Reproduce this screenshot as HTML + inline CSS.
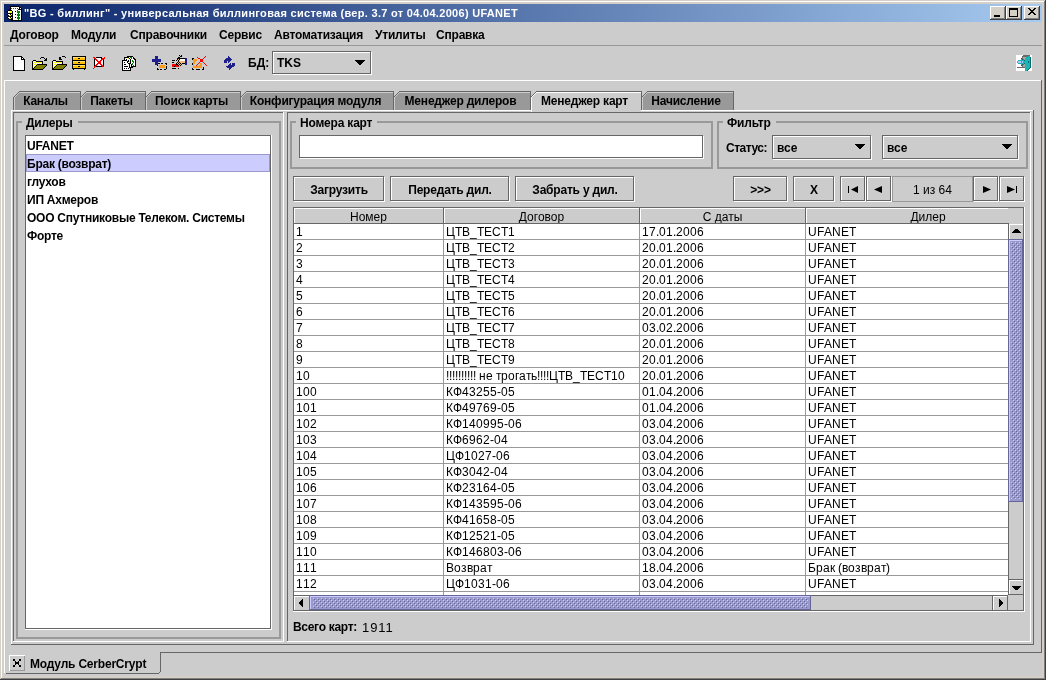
<!DOCTYPE html>
<html><head><meta charset="utf-8"><style>
html,body{margin:0;padding:0;width:1046px;height:680px;overflow:hidden;background:#cccccc}
body>div,#root div{position:absolute}
#root{position:absolute;left:0;top:0;width:1046px;height:680px;overflow:hidden;will-change:transform}
.t{font-family:"Liberation Sans",sans-serif;line-height:14px;white-space:pre;color:#000}
svg{position:absolute;shape-rendering:crispEdges}
</style></head><body><div id="root">
<div style="left:0px;top:0px;width:1046px;height:680px;background:#d4d0c8;"></div>
<div style="left:4px;top:22px;width:1038px;height:654px;background:#cccccc;"></div>
<div style="left:0px;top:0px;width:1046px;height:1px;background:#d4d0c8;"></div>
<div style="left:0px;top:0px;width:1px;height:680px;background:#d4d0c8;"></div>
<div style="left:1px;top:1px;width:1044px;height:1px;background:#ffffff;"></div>
<div style="left:1px;top:1px;width:1px;height:678px;background:#ffffff;"></div>
<div style="left:0px;top:679px;width:1046px;height:1px;background:#404040;"></div>
<div style="left:1045px;top:0px;width:1px;height:680px;background:#404040;"></div>
<div style="left:1px;top:678px;width:1044px;height:1px;background:#808080;"></div>
<div style="left:1044px;top:1px;width:1px;height:678px;background:#808080;"></div>
<div style="left:4px;top:4px;width:1038px;height:18px;background:#0a246a;background:linear-gradient(to right,#0a246a,#a6caf0);"></div>
<svg style="left:7px;top:6px" width="15" height="15"><path d="M3 0h9v1h-9zM3 1h1v1h-1zM12 1h2v1h-2zM3 2h1v1h-1zM12 2h1v1h-1zM14 2h1v1h-1zM2 3h2v1h-2zM11 3h4v1h-4zM1 4h4v1h-4zM14 4h1v1h-1zM0 5h1v1h-1zM5 5h1v1h-1zM8 5h1v1h-1zM14 5h1v1h-1zM0 6h1v1h-1zM5 6h1v1h-1zM14 6h1v1h-1zM1 7h5v1h-5zM14 7h1v1h-1zM0 8h1v1h-1zM3 8h1v1h-1zM5 8h1v1h-1zM8 8h1v1h-1zM14 8h1v1h-1zM1 9h1v1h-1zM4 9h2v1h-2zM14 9h1v1h-1zM1 10h5v1h-5zM14 10h1v1h-1zM0 11h1v1h-1zM3 11h1v1h-1zM5 11h1v1h-1zM8 11h1v1h-1zM14 11h1v1h-1zM1 12h1v1h-1zM4 12h2v1h-2zM14 12h1v1h-1zM2 13h4v1h-4zM14 13h1v1h-1zM4 14h11v1h-11z" fill="#000000"/><path d="M4 1h8v1h-8zM5 2h1v1h-1zM7 2h1v1h-1zM9 2h1v1h-1zM11 2h1v1h-1zM13 2h1v1h-1zM4 3h7v1h-7zM5 4h5v1h-5zM11 4h3v1h-3zM1 5h2v1h-2zM6 5h2v1h-2zM9 5h1v1h-1zM13 5h1v1h-1zM1 6h1v1h-1zM6 6h4v1h-4zM13 6h1v1h-1zM6 7h5v1h-5zM12 7h2v1h-2zM1 8h2v1h-2zM6 8h2v1h-2zM9 8h1v1h-1zM13 8h1v1h-1zM6 9h4v1h-4zM13 9h1v1h-1zM6 10h5v1h-5zM12 10h2v1h-2zM1 11h2v1h-2zM6 11h2v1h-2zM9 11h1v1h-1zM13 11h1v1h-1zM6 12h4v1h-4zM13 12h1v1h-1zM6 13h5v1h-5zM12 13h2v1h-2z" fill="#ffffff"/><path d="M4 2h1v1h-1zM6 2h1v1h-1zM8 2h1v1h-1zM10 2h1v1h-1z" fill="#ff0000"/><path d="M10 4h1v1h-1zM10 5h3v1h-3zM10 6h3v1h-3zM11 7h1v1h-1zM10 8h3v1h-3zM10 9h3v1h-3zM11 10h1v1h-1zM10 11h3v1h-3zM10 12h3v1h-3zM11 13h1v1h-1z" fill="#008000"/><path d="M3 5h2v1h-2zM2 6h3v1h-3zM4 8h1v1h-1zM2 9h2v1h-2zM4 11h1v1h-1zM2 12h2v1h-2z" fill="#ffff00"/></svg>
<svg style="left:13px;top:56px" width="12" height="15"><path d="M0 0h9v1h-9zM0 1h1v1h-1zM8 1h2v1h-2zM0 2h1v1h-1zM8 2h1v1h-1zM10 2h1v1h-1zM0 3h1v1h-1zM8 3h4v1h-4zM0 4h1v1h-1zM11 4h1v1h-1zM0 5h1v1h-1zM11 5h1v1h-1zM0 6h1v1h-1zM11 6h1v1h-1zM0 7h1v1h-1zM11 7h1v1h-1zM0 8h1v1h-1zM11 8h1v1h-1zM0 9h1v1h-1zM11 9h1v1h-1zM0 10h1v1h-1zM11 10h1v1h-1zM0 11h1v1h-1zM11 11h1v1h-1zM0 12h1v1h-1zM11 12h1v1h-1zM0 13h1v1h-1zM11 13h1v1h-1zM0 14h12v1h-12z" fill="#000000"/><path d="M1 1h7v1h-7zM1 2h7v1h-7zM9 2h1v1h-1zM1 3h7v1h-7zM1 4h10v1h-10zM1 5h10v1h-10zM1 6h10v1h-10zM1 7h10v1h-10zM1 8h10v1h-10zM1 9h10v1h-10zM1 10h10v1h-10zM1 11h10v1h-10zM1 12h10v1h-10zM1 13h10v1h-10z" fill="#ffffff"/></svg>
<svg style="left:40px;top:57px" width="7" height="4"><path d="M1 0h3v1h-3zM0 1h1v1h-1zM4 1h1v1h-1zM6 1h1v1h-1zM5 2h2v1h-2zM4 3h3v1h-3z" fill="#000000"/></svg>
<svg style="left:31px;top:60px" width="16" height="10"><path d="M2 0h3v1h-3zM1 1h1v1h-1zM5 1h7v1h-7zM1 2h1v1h-1zM11 2h1v1h-1zM1 3h1v1h-1zM11 3h1v1h-1zM1 4h1v1h-1zM6 4h10v1h-10zM1 5h1v1h-1zM5 5h1v1h-1zM15 5h1v1h-1zM1 6h1v1h-1zM4 6h1v1h-1zM14 6h1v1h-1zM1 7h1v1h-1zM3 7h1v1h-1zM13 7h1v1h-1zM1 8h2v1h-2zM12 8h1v1h-1zM1 9h11v1h-11z" fill="#000000"/><path d="M2 1h1v1h-1zM4 1h1v1h-1zM3 2h1v1h-1zM5 2h1v1h-1zM7 2h1v1h-1zM9 2h1v1h-1zM2 3h1v1h-1zM4 3h1v1h-1zM6 3h1v1h-1zM8 3h1v1h-1zM10 3h1v1h-1zM3 4h1v1h-1zM5 4h1v1h-1zM2 5h1v1h-1zM4 5h1v1h-1zM3 6h1v1h-1zM2 7h1v1h-1z" fill="#ffff00"/><path d="M3 1h1v1h-1zM2 2h1v1h-1zM4 2h1v1h-1zM6 2h1v1h-1zM8 2h1v1h-1zM10 2h1v1h-1zM3 3h1v1h-1zM5 3h1v1h-1zM7 3h1v1h-1zM9 3h1v1h-1zM2 4h1v1h-1zM4 4h1v1h-1zM3 5h1v1h-1zM2 6h1v1h-1z" fill="#ffffff"/><path d="M6 5h9v1h-9zM5 6h9v1h-9zM4 7h9v1h-9zM3 8h9v1h-9z" fill="#808000"/></svg>
<svg style="left:59px;top:56px" width="7" height="4"><path d="M3 0h3v1h-3zM0 1h2v1h-2zM6 1h1v1h-1zM0 2h2v1h-2zM0 3h3v1h-3z" fill="#000000"/></svg>
<svg style="left:51px;top:60px" width="16" height="10"><path d="M2 0h3v1h-3zM1 1h1v1h-1zM5 1h7v1h-7zM1 2h1v1h-1zM11 2h1v1h-1zM1 3h1v1h-1zM11 3h1v1h-1zM1 4h1v1h-1zM6 4h10v1h-10zM1 5h1v1h-1zM5 5h1v1h-1zM15 5h1v1h-1zM1 6h1v1h-1zM4 6h1v1h-1zM14 6h1v1h-1zM1 7h1v1h-1zM3 7h1v1h-1zM13 7h1v1h-1zM1 8h2v1h-2zM12 8h1v1h-1zM1 9h11v1h-11z" fill="#000000"/><path d="M2 1h1v1h-1zM4 1h1v1h-1zM3 2h1v1h-1zM5 2h1v1h-1zM7 2h1v1h-1zM9 2h1v1h-1zM2 3h1v1h-1zM4 3h1v1h-1zM6 3h1v1h-1zM8 3h1v1h-1zM10 3h1v1h-1zM3 4h1v1h-1zM5 4h1v1h-1zM2 5h1v1h-1zM4 5h1v1h-1zM3 6h1v1h-1zM2 7h1v1h-1z" fill="#ffff00"/><path d="M3 1h1v1h-1zM2 2h1v1h-1zM4 2h1v1h-1zM6 2h1v1h-1zM8 2h1v1h-1zM10 2h1v1h-1zM3 3h1v1h-1zM5 3h1v1h-1zM7 3h1v1h-1zM9 3h1v1h-1zM2 4h1v1h-1zM4 4h1v1h-1zM3 5h1v1h-1zM2 6h1v1h-1z" fill="#ffffff"/><path d="M6 5h9v1h-9zM5 6h9v1h-9zM4 7h9v1h-9zM3 8h9v1h-9z" fill="#808000"/></svg>
<svg style="left:72px;top:56px" width="14" height="14"><path d="M0 0h14v1h-14zM0 1h1v1h-1zM13 1h1v1h-1zM0 2h1v1h-1zM6 2h2v1h-2zM13 2h1v1h-1zM0 3h1v1h-1zM13 3h1v1h-1zM0 4h14v1h-14zM0 5h1v1h-1zM13 5h1v1h-1zM0 6h1v1h-1zM6 6h2v1h-2zM13 6h1v1h-1zM0 7h1v1h-1zM13 7h1v1h-1zM0 8h14v1h-14zM0 9h1v1h-1zM13 9h1v1h-1zM0 10h1v1h-1zM6 10h2v1h-2zM13 10h1v1h-1zM0 11h1v1h-1zM13 11h1v1h-1zM0 12h14v1h-14zM1 13h1v1h-1zM12 13h1v1h-1z" fill="#000000"/><path d="M1 1h12v1h-12zM1 5h12v1h-12zM1 9h12v1h-12z" fill="#ffe070"/><path d="M1 2h5v1h-5zM8 2h5v1h-5zM1 3h12v1h-12zM1 6h5v1h-5zM8 6h5v1h-5zM1 7h12v1h-12zM1 10h5v1h-5zM8 10h5v1h-5zM1 11h12v1h-12z" fill="#ffbf00"/></svg>
<svg style="left:93px;top:57px" width="12" height="12"><path d="M0 0h2v1h-2zM11 0h1v1h-1zM1 1h2v1h-2zM9 1h3v1h-3zM2 2h2v1h-2zM8 2h2v1h-2zM3 3h2v1h-2zM7 3h2v1h-2zM4 4h4v1h-4zM5 5h3v1h-3zM4 6h4v1h-4zM3 7h2v1h-2zM7 7h2v1h-2zM2 8h2v1h-2zM8 8h2v1h-2zM1 9h2v1h-2zM9 9h2v1h-2zM1 10h1v1h-1zM0 11h1v1h-1z" fill="#ff0000"/><path d="M3 0h6v1h-6zM8 1h1v1h-1zM1 2h1v1h-1zM10 2h1v1h-1zM1 3h1v1h-1zM10 3h1v1h-1zM1 4h1v1h-1zM10 4h1v1h-1zM1 5h1v1h-1zM10 5h1v1h-1zM1 6h1v1h-1zM10 6h1v1h-1zM1 7h1v1h-1zM10 7h1v1h-1zM1 8h1v1h-1zM10 8h1v1h-1zM3 9h6v1h-6z" fill="#000000"/><path d="M3 1h5v1h-5zM4 2h4v1h-4zM2 3h1v1h-1zM5 3h2v1h-2zM9 3h1v1h-1zM2 4h2v1h-2zM8 4h2v1h-2zM2 5h3v1h-3zM8 5h2v1h-2zM2 6h2v1h-2zM8 6h2v1h-2zM2 7h1v1h-1zM5 7h2v1h-2zM9 7h1v1h-1zM4 8h4v1h-4z" fill="#ffffff"/></svg>
<svg style="left:122px;top:56px" width="14" height="15"><path d="M5 0h6v1h-6zM2 1h5v1h-5zM11 1h1v1h-1zM2 2h1v1h-1zM7 2h1v1h-1zM11 2h2v1h-2zM2 3h1v1h-1zM4 3h1v1h-1zM8 3h1v1h-1zM12 3h2v1h-2zM0 4h5v1h-5zM6 4h1v1h-1zM8 4h1v1h-1zM13 4h1v1h-1zM0 5h1v1h-1zM5 5h2v1h-2zM8 5h1v1h-1zM13 5h1v1h-1zM0 6h1v1h-1zM2 6h1v1h-1zM5 6h1v1h-1zM8 6h1v1h-1zM13 6h1v1h-1zM0 7h1v1h-1zM6 7h3v1h-3zM13 7h1v1h-1zM0 8h1v1h-1zM2 8h2v1h-2zM7 8h1v1h-1zM9 8h1v1h-1zM13 8h1v1h-1zM0 9h1v1h-1zM7 9h1v1h-1zM9 9h1v1h-1zM13 9h1v1h-1zM0 10h1v1h-1zM2 10h4v1h-4zM7 10h1v1h-1zM9 10h5v1h-5zM0 11h1v1h-1zM7 11h4v1h-4zM0 12h1v1h-1zM2 12h1v1h-1zM4 12h1v1h-1zM6 12h1v1h-1zM8 12h1v1h-1zM0 13h1v1h-1zM8 13h1v1h-1zM0 14h9v1h-9z" fill="#000000"/><path d="M7 1h1v1h-1zM10 1h1v1h-1zM4 2h2v1h-2zM8 2h1v1h-1zM10 2h1v1h-1zM3 3h1v1h-1zM5 3h2v1h-2zM9 3h3v1h-3zM5 4h1v1h-1zM7 4h1v1h-1zM9 4h1v1h-1zM11 4h2v1h-2zM1 5h4v1h-4zM9 5h1v1h-1zM12 5h1v1h-1zM1 6h1v1h-1zM3 6h2v1h-2zM6 6h1v1h-1zM9 6h2v1h-2zM12 6h1v1h-1zM1 7h5v1h-5zM9 7h1v1h-1zM11 7h2v1h-2zM1 8h1v1h-1zM4 8h3v1h-3zM8 8h1v1h-1zM11 8h2v1h-2zM1 9h6v1h-6zM8 9h1v1h-1zM10 9h1v1h-1zM12 9h1v1h-1zM1 10h1v1h-1zM6 10h1v1h-1zM8 10h1v1h-1zM1 11h6v1h-6zM1 12h1v1h-1zM3 12h1v1h-1zM5 12h1v1h-1zM7 12h1v1h-1zM1 13h7v1h-7z" fill="#ffffff"/><path d="M8 1h2v1h-2zM9 2h1v1h-1zM10 4h1v1h-1zM10 5h2v1h-2zM11 6h1v1h-1zM10 7h1v1h-1zM10 8h1v1h-1zM11 9h1v1h-1z" fill="#008000"/><path d="M3 2h1v1h-1zM6 2h1v1h-1zM7 3h1v1h-1zM7 5h1v1h-1zM7 6h1v1h-1z" fill="#ffff00"/></svg>
<svg style="left:152px;top:56px" width="15" height="14"><path d="M3 0h3v1h-3zM3 1h3v1h-3zM3 2h3v1h-3zM0 3h9v1h-9zM0 4h9v1h-9zM0 5h9v1h-9zM3 6h3v1h-3zM3 7h3v1h-3zM3 8h3v1h-3z" fill="#1e1e8e"/><path d="M6 7h2v1h-2zM9 7h2v1h-2zM13 7h2v1h-2zM14 8h1v1h-1zM5 9h1v1h-1zM14 10h1v1h-1zM14 11h1v1h-1zM5 12h1v1h-1zM14 12h1v1h-1zM5 13h2v1h-2zM8 13h2v1h-2zM12 13h2v1h-2z" fill="#000000"/><path d="M7 9h6v1h-6zM7 10h6v1h-6zM7 11h6v1h-6z" fill="#ff9a1a"/></svg>
<svg style="left:172px;top:55px" width="15" height="14"><path d="M7 0h1v1h-1zM9 0h1v1h-1zM8 1h2v1h-2zM6 2h2v1h-2zM5 3h8v1h-8zM5 4h1v1h-1zM7 4h1v1h-1zM0 5h3v1h-3zM4 5h1v1h-1zM6 5h1v1h-1zM6 6h1v1h-1zM0 7h2v1h-2zM5 7h1v1h-1zM7 7h1v1h-1zM4 8h1v1h-1zM6 8h1v1h-1zM8 8h1v1h-1zM10 8h3v1h-3zM4 9h2v1h-2zM7 9h1v1h-1zM9 9h1v1h-1zM3 10h1v1h-1zM6 10h1v1h-1zM8 10h1v1h-1zM2 11h1v1h-1zM0 13h4v1h-4zM6 13h1v1h-1z" fill="#000000"/><path d="M13 3h2v1h-2zM13 4h2v1h-2zM13 5h2v1h-2zM13 6h2v1h-2zM13 7h2v1h-2zM13 8h2v1h-2zM13 9h2v1h-2z" fill="#1e1e8e"/><path d="M6 4h1v1h-1zM5 5h1v1h-1zM7 5h1v1h-1zM5 6h1v1h-1zM7 6h6v1h-6zM4 7h1v1h-1zM6 7h1v1h-1zM8 7h5v1h-5zM5 8h1v1h-1zM7 8h1v1h-1zM9 8h1v1h-1zM6 9h1v1h-1zM8 9h1v1h-1zM7 10h1v1h-1zM9 10h1v1h-1zM8 11h1v1h-1z" fill="#f0b878"/><path d="M8 4h5v1h-5zM8 5h5v1h-5z" fill="#ffffff"/><path d="M0 9h4v1h-4zM0 10h3v1h-3zM4 10h2v1h-2zM0 11h2v1h-2zM3 11h4v1h-4z" fill="#ff0000"/></svg>
<svg style="left:192px;top:56px" width="15" height="14"><path d="M13 0h1v1h-1zM5 1h1v1h-1zM12 1h1v1h-1zM6 2h2v1h-2zM11 2h1v1h-1zM8 3h3v1h-3zM8 4h3v1h-3zM8 5h3v1h-3zM7 6h1v1h-1zM11 6h1v1h-1zM6 7h1v1h-1zM12 7h1v1h-1zM5 8h1v1h-1zM13 8h1v1h-1zM4 9h1v1h-1zM14 9h1v1h-1z" fill="#ff0000"/><path d="M0 2h2v1h-2zM0 3h1v1h-1zM0 7h1v1h-1zM0 8h1v1h-1zM11 11h1v1h-1zM0 12h1v1h-1zM11 12h1v1h-1zM0 13h2v1h-2zM4 13h4v1h-4zM10 13h2v1h-2z" fill="#000000"/><path d="M1 3h4v1h-4zM1 4h4v1h-4zM1 5h3v1h-3zM1 6h2v1h-2zM1 7h2v1h-2zM8 7h2v1h-2zM1 8h1v1h-1zM8 8h2v1h-2zM1 9h1v1h-1zM7 9h3v1h-3zM1 10h9v1h-9zM1 11h9v1h-9z" fill="#ff9a1a"/></svg>
<svg style="left:224px;top:56px" width="11" height="14"><path d="M4 0h1v1h-1zM4 1h2v1h-2zM2 2h5v1h-5zM1 3h7v1h-7zM0 4h7v1h-7zM0 5h3v1h-3zM4 5h2v1h-2zM0 6h3v1h-3zM4 6h1v1h-1zM6 7h1v1h-1zM8 7h3v1h-3zM5 8h2v1h-2zM8 8h3v1h-3zM4 9h7v1h-7zM2 10h8v1h-8zM3 11h5v1h-5zM5 12h2v1h-2zM5 13h1v1h-1z" fill="#1e1e8e"/></svg>
<svg style="left:1016px;top:55px" width="16" height="16"><path d="M0 0h7v1h-7zM14 0h2v1h-2zM0 1h6v1h-6zM14 1h2v1h-2zM0 2h6v1h-6zM15 2h1v1h-1zM0 3h5v1h-5zM15 3h1v1h-1zM0 4h5v1h-5zM15 4h1v1h-1zM0 5h2v1h-2zM15 5h1v1h-1zM0 6h1v1h-1zM15 6h1v1h-1zM0 7h1v1h-1zM15 7h1v1h-1zM0 8h2v1h-2zM15 8h1v1h-1zM0 9h5v1h-5zM15 9h1v1h-1zM0 10h5v1h-5zM15 10h1v1h-1zM0 11h6v1h-6zM15 11h1v1h-1zM0 12h1v1h-1zM15 12h1v1h-1zM0 13h9v1h-9zM14 13h2v1h-2zM0 14h9v1h-9zM13 14h3v1h-3zM0 15h9v1h-9zM12 15h4v1h-4z" fill="#ffffff"/><path d="M7 0h7v1h-7zM6 1h6v1h-6zM6 2h1v1h-1zM6 3h1v1h-1zM7 4h1v1h-1zM7 9h1v1h-1zM6 10h1v1h-1zM6 11h1v1h-1zM1 12h8v1h-8z" fill="#6a6a6a"/><path d="M12 1h2v1h-2zM10 2h4v1h-4zM9 3h5v1h-5zM5 4h1v1h-1zM9 4h5v1h-5zM2 5h6v1h-6zM9 5h5v1h-5zM1 6h1v1h-1zM5 6h1v1h-1zM7 6h5v1h-5zM13 6h1v1h-1zM1 7h1v1h-1zM5 7h1v1h-1zM7 7h5v1h-5zM13 7h1v1h-1zM2 8h6v1h-6zM9 8h5v1h-5zM5 9h1v1h-1zM9 9h5v1h-5zM9 10h5v1h-5zM9 11h5v1h-5zM9 12h5v1h-5zM9 13h4v1h-4zM9 14h3v1h-3zM9 15h2v1h-2z" fill="#1cb4b4"/><path d="M7 2h3v1h-3zM7 3h2v1h-2zM8 4h1v1h-1zM8 9h1v1h-1zM7 10h2v1h-2zM7 11h2v1h-2z" fill="#a8a8a8"/><path d="M14 2h1v1h-1zM5 3h1v1h-1zM14 3h1v1h-1zM6 4h1v1h-1zM14 4h1v1h-1zM8 5h1v1h-1zM14 5h1v1h-1zM12 6h1v1h-1zM14 6h1v1h-1zM12 7h1v1h-1zM14 7h1v1h-1zM8 8h1v1h-1zM14 8h1v1h-1zM6 9h1v1h-1zM14 9h1v1h-1zM5 10h1v1h-1zM14 10h1v1h-1zM14 11h1v1h-1zM14 12h1v1h-1zM13 13h1v1h-1zM12 14h1v1h-1zM11 15h1v1h-1z" fill="#006a6a"/><path d="M2 6h3v1h-3zM6 6h1v1h-1zM2 7h3v1h-3zM6 7h1v1h-1z" fill="#b0c8ff"/></svg>
<div class="t" style="left:24px;top:6px;font-size:11px;font-weight:700;color:#fff;letter-spacing:0.3px;">"BG - биллинг" - универсальная биллинговая система (вер. 3.7 от 04.04.2006) UFANET</div>
<div style="left:990px;top:6px;width:16px;height:14px;background:#d4d0c8;"></div>
<div style="left:990px;top:6px;width:16px;height:1px;background:#ffffff;"></div>
<div style="left:990px;top:6px;width:1px;height:14px;background:#ffffff;"></div>
<div style="left:990px;top:19px;width:16px;height:1px;background:#404040;"></div>
<div style="left:1005px;top:6px;width:1px;height:14px;background:#404040;"></div>
<div style="left:991px;top:18px;width:14px;height:1px;background:#808080;"></div>
<div style="left:1004px;top:7px;width:1px;height:12px;background:#808080;"></div>
<div style="left:1006px;top:6px;width:16px;height:14px;background:#d4d0c8;"></div>
<div style="left:1006px;top:6px;width:16px;height:1px;background:#ffffff;"></div>
<div style="left:1006px;top:6px;width:1px;height:14px;background:#ffffff;"></div>
<div style="left:1006px;top:19px;width:16px;height:1px;background:#404040;"></div>
<div style="left:1021px;top:6px;width:1px;height:14px;background:#404040;"></div>
<div style="left:1007px;top:18px;width:14px;height:1px;background:#808080;"></div>
<div style="left:1020px;top:7px;width:1px;height:12px;background:#808080;"></div>
<div style="left:1024px;top:6px;width:16px;height:14px;background:#d4d0c8;"></div>
<div style="left:1024px;top:6px;width:16px;height:1px;background:#ffffff;"></div>
<div style="left:1024px;top:6px;width:1px;height:14px;background:#ffffff;"></div>
<div style="left:1024px;top:19px;width:16px;height:1px;background:#404040;"></div>
<div style="left:1039px;top:6px;width:1px;height:14px;background:#404040;"></div>
<div style="left:1025px;top:18px;width:14px;height:1px;background:#808080;"></div>
<div style="left:1038px;top:7px;width:1px;height:12px;background:#808080;"></div>
<div style="left:994px;top:15px;width:6px;height:2px;background:#000;"></div>
<div style="left:1009px;top:8px;width:9px;height:1px;background:#000;"></div>
<div style="left:1009px;top:16px;width:9px;height:1px;background:#000;"></div>
<div style="left:1009px;top:8px;width:1px;height:9px;background:#000;"></div>
<div style="left:1017px;top:8px;width:1px;height:9px;background:#000;"></div>
<div style="left:1009px;top:9px;width:9px;height:1px;background:#000;"></div>
<svg style="left:1028px;top:8px" width="9" height="8"><path d="M0 0h2v1h-2zM6 0h2v1h-2zM1 1h2v1h-2zM5 1h2v1h-2zM2 2h4v1h-4zM3 3h2v1h-2zM2 4h4v1h-4zM1 5h2v1h-2zM5 5h2v1h-2zM0 6h2v1h-2zM6 6h2v1h-2z" fill="#000"/></svg>
<div class="t" style="left:10px;top:28px;font-size:12px;font-weight:700;color:#000;letter-spacing:-0.2px;">Договор</div>
<div class="t" style="left:71px;top:28px;font-size:12px;font-weight:700;color:#000;letter-spacing:-0.2px;">Модули</div>
<div class="t" style="left:130px;top:28px;font-size:12px;font-weight:700;color:#000;letter-spacing:-0.2px;">Справочники</div>
<div class="t" style="left:219px;top:28px;font-size:12px;font-weight:700;color:#000;letter-spacing:-0.2px;">Сервис</div>
<div class="t" style="left:274px;top:28px;font-size:12px;font-weight:700;color:#000;letter-spacing:-0.2px;">Автоматизация</div>
<div class="t" style="left:375px;top:28px;font-size:12px;font-weight:700;color:#000;letter-spacing:-0.2px;">Утилиты</div>
<div class="t" style="left:436px;top:28px;font-size:12px;font-weight:700;color:#000;letter-spacing:-0.2px;">Справка</div>
<div style="left:4px;top:45px;width:1038px;height:1px;background:#999999;"></div>
<div class="t" style="left:248px;top:56px;font-size:12px;font-weight:700;color:#000;letter-spacing:0px;">БД:</div>
<div style="left:272px;top:51px;width:100px;height:24px;background:#cccccc;"></div>
<div style="left:273px;top:52px;width:99px;height:1px;background:#ffffff;"></div>
<div style="left:273px;top:74px;width:99px;height:1px;background:#ffffff;"></div>
<div style="left:273px;top:52px;width:1px;height:23px;background:#ffffff;"></div>
<div style="left:371px;top:52px;width:1px;height:23px;background:#ffffff;"></div>
<div style="left:272px;top:51px;width:99px;height:1px;background:#666666;"></div>
<div style="left:272px;top:73px;width:99px;height:1px;background:#666666;"></div>
<div style="left:272px;top:51px;width:1px;height:23px;background:#666666;"></div>
<div style="left:370px;top:51px;width:1px;height:23px;background:#666666;"></div>
<div class="t" style="left:277px;top:56px;font-size:12px;font-weight:700;color:#000;letter-spacing:0px;">TKS</div>
<svg style="left:355px;top:60px" width="10" height="5"><path d="M0 0h10v1h-10zM1 1h8v1h-8zM2 2h6v1h-6zM3 3h4v1h-4zM4 4h2v1h-2z" fill="#000"/></svg>
<div style="left:4px;top:80px;width:1038px;height:1px;background:#ffffff;"></div>
<div style="left:4px;top:80px;width:1px;height:572px;background:#ffffff;"></div>
<div style="left:11px;top:110px;width:1023px;height:1px;background:#ffffff;"></div>
<div style="left:11px;top:110px;width:1px;height:535px;background:#ffffff;"></div>
<div style="left:11px;top:644px;width:1023px;height:1px;background:#666666;"></div>
<div style="left:1033px;top:110px;width:1px;height:535px;background:#666666;"></div>
<div style="left:14px;top:97px;width:66px;height:13px;background:#999999;"></div>
<div style="left:15px;top:96px;width:65px;height:1px;background:#999999;"></div>
<div style="left:16px;top:95px;width:64px;height:1px;background:#999999;"></div>
<div style="left:17px;top:94px;width:63px;height:1px;background:#999999;"></div>
<div style="left:18px;top:93px;width:62px;height:1px;background:#999999;"></div>
<div style="left:19px;top:92px;width:61px;height:1px;background:#999999;"></div>
<div style="left:19px;top:92px;width:61px;height:1px;background:#999999;"></div>
<div style="left:19px;top:92px;width:61px;height:1px;background:#cccccc;"></div>
<div style="left:14px;top:97px;width:1px;height:1px;background:#cccccc;"></div>
<div style="left:15px;top:96px;width:1px;height:1px;background:#cccccc;"></div>
<div style="left:16px;top:95px;width:1px;height:1px;background:#cccccc;"></div>
<div style="left:17px;top:94px;width:1px;height:1px;background:#cccccc;"></div>
<div style="left:18px;top:93px;width:1px;height:1px;background:#cccccc;"></div>
<div style="left:14px;top:97px;width:1px;height:13px;background:#cccccc;"></div>
<div style="left:19px;top:91px;width:62px;height:1px;background:#666666;"></div>
<div style="left:14px;top:96px;width:1px;height:1px;background:#666666;"></div>
<div style="left:15px;top:95px;width:1px;height:1px;background:#666666;"></div>
<div style="left:16px;top:94px;width:1px;height:1px;background:#666666;"></div>
<div style="left:17px;top:93px;width:1px;height:1px;background:#666666;"></div>
<div style="left:18px;top:92px;width:1px;height:1px;background:#666666;"></div>
<div style="left:13px;top:97px;width:1px;height:13px;background:#666666;"></div>
<div style="left:80px;top:92px;width:1px;height:18px;background:#666666;"></div>
<div class="t" style="left:12px;width:67px;text-align:center;top:94px;font-size:12px;font-weight:700;letter-spacing:-0.2px">Каналы</div>
<div style="left:81px;top:97px;width:64px;height:13px;background:#999999;"></div>
<div style="left:82px;top:96px;width:63px;height:1px;background:#999999;"></div>
<div style="left:83px;top:95px;width:62px;height:1px;background:#999999;"></div>
<div style="left:84px;top:94px;width:61px;height:1px;background:#999999;"></div>
<div style="left:85px;top:93px;width:60px;height:1px;background:#999999;"></div>
<div style="left:86px;top:92px;width:59px;height:1px;background:#999999;"></div>
<div style="left:86px;top:92px;width:59px;height:1px;background:#999999;"></div>
<div style="left:86px;top:92px;width:59px;height:1px;background:#cccccc;"></div>
<div style="left:81px;top:97px;width:1px;height:1px;background:#cccccc;"></div>
<div style="left:82px;top:96px;width:1px;height:1px;background:#cccccc;"></div>
<div style="left:83px;top:95px;width:1px;height:1px;background:#cccccc;"></div>
<div style="left:84px;top:94px;width:1px;height:1px;background:#cccccc;"></div>
<div style="left:85px;top:93px;width:1px;height:1px;background:#cccccc;"></div>
<div style="left:81px;top:97px;width:1px;height:13px;background:#cccccc;"></div>
<div style="left:86px;top:91px;width:60px;height:1px;background:#666666;"></div>
<div style="left:81px;top:96px;width:1px;height:1px;background:#666666;"></div>
<div style="left:82px;top:95px;width:1px;height:1px;background:#666666;"></div>
<div style="left:83px;top:94px;width:1px;height:1px;background:#666666;"></div>
<div style="left:84px;top:93px;width:1px;height:1px;background:#666666;"></div>
<div style="left:85px;top:92px;width:1px;height:1px;background:#666666;"></div>
<div style="left:145px;top:92px;width:1px;height:18px;background:#666666;"></div>
<div class="t" style="left:79px;width:65px;text-align:center;top:94px;font-size:12px;font-weight:700;letter-spacing:-0.2px">Пакеты</div>
<div style="left:146px;top:97px;width:94px;height:13px;background:#999999;"></div>
<div style="left:147px;top:96px;width:93px;height:1px;background:#999999;"></div>
<div style="left:148px;top:95px;width:92px;height:1px;background:#999999;"></div>
<div style="left:149px;top:94px;width:91px;height:1px;background:#999999;"></div>
<div style="left:150px;top:93px;width:90px;height:1px;background:#999999;"></div>
<div style="left:151px;top:92px;width:89px;height:1px;background:#999999;"></div>
<div style="left:151px;top:92px;width:89px;height:1px;background:#999999;"></div>
<div style="left:151px;top:92px;width:89px;height:1px;background:#cccccc;"></div>
<div style="left:146px;top:97px;width:1px;height:1px;background:#cccccc;"></div>
<div style="left:147px;top:96px;width:1px;height:1px;background:#cccccc;"></div>
<div style="left:148px;top:95px;width:1px;height:1px;background:#cccccc;"></div>
<div style="left:149px;top:94px;width:1px;height:1px;background:#cccccc;"></div>
<div style="left:150px;top:93px;width:1px;height:1px;background:#cccccc;"></div>
<div style="left:146px;top:97px;width:1px;height:13px;background:#cccccc;"></div>
<div style="left:151px;top:91px;width:90px;height:1px;background:#666666;"></div>
<div style="left:146px;top:96px;width:1px;height:1px;background:#666666;"></div>
<div style="left:147px;top:95px;width:1px;height:1px;background:#666666;"></div>
<div style="left:148px;top:94px;width:1px;height:1px;background:#666666;"></div>
<div style="left:149px;top:93px;width:1px;height:1px;background:#666666;"></div>
<div style="left:150px;top:92px;width:1px;height:1px;background:#666666;"></div>
<div style="left:240px;top:92px;width:1px;height:18px;background:#666666;"></div>
<div class="t" style="left:144px;width:95px;text-align:center;top:94px;font-size:12px;font-weight:700;letter-spacing:-0.2px">Поиск карты</div>
<div style="left:241px;top:97px;width:152px;height:13px;background:#999999;"></div>
<div style="left:242px;top:96px;width:151px;height:1px;background:#999999;"></div>
<div style="left:243px;top:95px;width:150px;height:1px;background:#999999;"></div>
<div style="left:244px;top:94px;width:149px;height:1px;background:#999999;"></div>
<div style="left:245px;top:93px;width:148px;height:1px;background:#999999;"></div>
<div style="left:246px;top:92px;width:147px;height:1px;background:#999999;"></div>
<div style="left:246px;top:92px;width:147px;height:1px;background:#999999;"></div>
<div style="left:246px;top:92px;width:147px;height:1px;background:#cccccc;"></div>
<div style="left:241px;top:97px;width:1px;height:1px;background:#cccccc;"></div>
<div style="left:242px;top:96px;width:1px;height:1px;background:#cccccc;"></div>
<div style="left:243px;top:95px;width:1px;height:1px;background:#cccccc;"></div>
<div style="left:244px;top:94px;width:1px;height:1px;background:#cccccc;"></div>
<div style="left:245px;top:93px;width:1px;height:1px;background:#cccccc;"></div>
<div style="left:241px;top:97px;width:1px;height:13px;background:#cccccc;"></div>
<div style="left:246px;top:91px;width:148px;height:1px;background:#666666;"></div>
<div style="left:241px;top:96px;width:1px;height:1px;background:#666666;"></div>
<div style="left:242px;top:95px;width:1px;height:1px;background:#666666;"></div>
<div style="left:243px;top:94px;width:1px;height:1px;background:#666666;"></div>
<div style="left:244px;top:93px;width:1px;height:1px;background:#666666;"></div>
<div style="left:245px;top:92px;width:1px;height:1px;background:#666666;"></div>
<div style="left:393px;top:92px;width:1px;height:18px;background:#666666;"></div>
<div class="t" style="left:239px;width:153px;text-align:center;top:94px;font-size:12px;font-weight:700;letter-spacing:-0.2px">Конфигурация модуля</div>
<div style="left:394px;top:97px;width:136px;height:13px;background:#999999;"></div>
<div style="left:395px;top:96px;width:135px;height:1px;background:#999999;"></div>
<div style="left:396px;top:95px;width:134px;height:1px;background:#999999;"></div>
<div style="left:397px;top:94px;width:133px;height:1px;background:#999999;"></div>
<div style="left:398px;top:93px;width:132px;height:1px;background:#999999;"></div>
<div style="left:399px;top:92px;width:131px;height:1px;background:#999999;"></div>
<div style="left:399px;top:92px;width:131px;height:1px;background:#999999;"></div>
<div style="left:399px;top:92px;width:131px;height:1px;background:#cccccc;"></div>
<div style="left:394px;top:97px;width:1px;height:1px;background:#cccccc;"></div>
<div style="left:395px;top:96px;width:1px;height:1px;background:#cccccc;"></div>
<div style="left:396px;top:95px;width:1px;height:1px;background:#cccccc;"></div>
<div style="left:397px;top:94px;width:1px;height:1px;background:#cccccc;"></div>
<div style="left:398px;top:93px;width:1px;height:1px;background:#cccccc;"></div>
<div style="left:394px;top:97px;width:1px;height:13px;background:#cccccc;"></div>
<div style="left:399px;top:91px;width:132px;height:1px;background:#666666;"></div>
<div style="left:394px;top:96px;width:1px;height:1px;background:#666666;"></div>
<div style="left:395px;top:95px;width:1px;height:1px;background:#666666;"></div>
<div style="left:396px;top:94px;width:1px;height:1px;background:#666666;"></div>
<div style="left:397px;top:93px;width:1px;height:1px;background:#666666;"></div>
<div style="left:398px;top:92px;width:1px;height:1px;background:#666666;"></div>
<div style="left:530px;top:92px;width:1px;height:18px;background:#666666;"></div>
<div class="t" style="left:392px;width:137px;text-align:center;top:94px;font-size:12px;font-weight:700;letter-spacing:-0.2px">Менеджер дилеров</div>
<div style="left:642px;top:97px;width:91px;height:13px;background:#999999;"></div>
<div style="left:643px;top:96px;width:90px;height:1px;background:#999999;"></div>
<div style="left:644px;top:95px;width:89px;height:1px;background:#999999;"></div>
<div style="left:645px;top:94px;width:88px;height:1px;background:#999999;"></div>
<div style="left:646px;top:93px;width:87px;height:1px;background:#999999;"></div>
<div style="left:647px;top:92px;width:86px;height:1px;background:#999999;"></div>
<div style="left:647px;top:92px;width:86px;height:1px;background:#999999;"></div>
<div style="left:647px;top:92px;width:86px;height:1px;background:#cccccc;"></div>
<div style="left:642px;top:97px;width:1px;height:1px;background:#cccccc;"></div>
<div style="left:643px;top:96px;width:1px;height:1px;background:#cccccc;"></div>
<div style="left:644px;top:95px;width:1px;height:1px;background:#cccccc;"></div>
<div style="left:645px;top:94px;width:1px;height:1px;background:#cccccc;"></div>
<div style="left:646px;top:93px;width:1px;height:1px;background:#cccccc;"></div>
<div style="left:642px;top:97px;width:1px;height:13px;background:#cccccc;"></div>
<div style="left:647px;top:91px;width:87px;height:1px;background:#666666;"></div>
<div style="left:642px;top:96px;width:1px;height:1px;background:#666666;"></div>
<div style="left:643px;top:95px;width:1px;height:1px;background:#666666;"></div>
<div style="left:644px;top:94px;width:1px;height:1px;background:#666666;"></div>
<div style="left:645px;top:93px;width:1px;height:1px;background:#666666;"></div>
<div style="left:646px;top:92px;width:1px;height:1px;background:#666666;"></div>
<div style="left:733px;top:92px;width:1px;height:18px;background:#666666;"></div>
<div class="t" style="left:640px;width:92px;text-align:center;top:94px;font-size:12px;font-weight:700;letter-spacing:-0.2px">Начисление</div>
<div style="left:531px;top:97px;width:110px;height:15px;background:#cccccc;"></div>
<div style="left:532px;top:96px;width:109px;height:1px;background:#cccccc;"></div>
<div style="left:533px;top:95px;width:108px;height:1px;background:#cccccc;"></div>
<div style="left:534px;top:94px;width:107px;height:1px;background:#cccccc;"></div>
<div style="left:535px;top:93px;width:106px;height:1px;background:#cccccc;"></div>
<div style="left:536px;top:92px;width:105px;height:1px;background:#cccccc;"></div>
<div style="left:536px;top:92px;width:105px;height:1px;background:#cccccc;"></div>
<div style="left:536px;top:92px;width:105px;height:1px;background:#ffffff;"></div>
<div style="left:531px;top:97px;width:1px;height:1px;background:#ffffff;"></div>
<div style="left:532px;top:96px;width:1px;height:1px;background:#ffffff;"></div>
<div style="left:533px;top:95px;width:1px;height:1px;background:#ffffff;"></div>
<div style="left:534px;top:94px;width:1px;height:1px;background:#ffffff;"></div>
<div style="left:535px;top:93px;width:1px;height:1px;background:#ffffff;"></div>
<div style="left:531px;top:97px;width:1px;height:15px;background:#ffffff;"></div>
<div style="left:536px;top:91px;width:106px;height:1px;background:#666666;"></div>
<div style="left:531px;top:96px;width:1px;height:1px;background:#666666;"></div>
<div style="left:532px;top:95px;width:1px;height:1px;background:#666666;"></div>
<div style="left:533px;top:94px;width:1px;height:1px;background:#666666;"></div>
<div style="left:534px;top:93px;width:1px;height:1px;background:#666666;"></div>
<div style="left:535px;top:92px;width:1px;height:1px;background:#666666;"></div>
<div style="left:641px;top:92px;width:1px;height:18px;background:#666666;"></div>
<div class="t" style="left:529px;width:111px;text-align:center;top:94px;font-size:12px;font-weight:700;letter-spacing:-0.2px">Менеджер карт</div>
<div style="left:13px;top:112px;width:271px;height:1px;background:#666666;"></div>
<div style="left:13px;top:112px;width:1px;height:530px;background:#666666;"></div>
<div style="left:13px;top:641px;width:271px;height:1px;background:#ffffff;"></div>
<div style="left:283px;top:112px;width:1px;height:530px;background:#ffffff;"></div>
<div style="left:16px;top:121px;width:265px;height:2px;background:#999999;"></div>
<div style="left:16px;top:637px;width:265px;height:2px;background:#999999;"></div>
<div style="left:16px;top:121px;width:2px;height:518px;background:#999999;"></div>
<div style="left:279px;top:121px;width:2px;height:518px;background:#999999;"></div>
<div style="left:22px;top:121px;width:56px;height:2px;background:#cccccc;"></div>
<div class="t" style="left:26px;top:116px;font-size:12px;font-weight:700;color:#000;letter-spacing:-0.2px;">Дилеры</div>
<div style="left:25px;top:135px;width:247px;height:495px;background:#ffffff;"></div>
<div style="left:25px;top:135px;width:246px;height:1px;background:#666666;"></div>
<div style="left:25px;top:135px;width:1px;height:494px;background:#666666;"></div>
<div style="left:25px;top:629px;width:247px;height:1px;background:#ffffff;"></div>
<div style="left:271px;top:135px;width:1px;height:495px;background:#ffffff;"></div>
<div style="left:25px;top:628px;width:246px;height:1px;background:#666666;"></div>
<div style="left:270px;top:135px;width:1px;height:494px;background:#666666;"></div>
<div class="t" style="left:27px;top:139px;font-size:12px;font-weight:700;color:#000;letter-spacing:-0.25px;">UFANET</div>
<div style="left:26px;top:154px;width:244px;height:18px;background:#ccccff;"></div>
<div style="left:26px;top:154px;width:244px;height:1px;background:#9999cc;"></div>
<div style="left:26px;top:171px;width:244px;height:1px;background:#9999cc;"></div>
<div style="left:26px;top:154px;width:1px;height:18px;background:#9999cc;"></div>
<div style="left:269px;top:154px;width:1px;height:18px;background:#9999cc;"></div>
<div class="t" style="left:27px;top:157px;font-size:12px;font-weight:700;color:#000;letter-spacing:-0.25px;">Брак (возврат)</div>
<div class="t" style="left:27px;top:175px;font-size:12px;font-weight:700;color:#000;letter-spacing:-0.25px;">глухов</div>
<div class="t" style="left:27px;top:193px;font-size:12px;font-weight:700;color:#000;letter-spacing:-0.25px;">ИП Ахмеров</div>
<div class="t" style="left:27px;top:211px;font-size:12px;font-weight:700;color:#000;letter-spacing:-0.25px;">ООО Спутниковые Телеком. Системы</div>
<div class="t" style="left:27px;top:229px;font-size:12px;font-weight:700;color:#000;letter-spacing:-0.25px;">Форте</div>
<div style="left:287px;top:112px;width:744px;height:1px;background:#666666;"></div>
<div style="left:287px;top:112px;width:1px;height:530px;background:#666666;"></div>
<div style="left:287px;top:641px;width:744px;height:1px;background:#ffffff;"></div>
<div style="left:1030px;top:112px;width:1px;height:530px;background:#ffffff;"></div>
<div style="left:290px;top:121px;width:423px;height:2px;background:#999999;"></div>
<div style="left:290px;top:167px;width:423px;height:2px;background:#999999;"></div>
<div style="left:290px;top:121px;width:2px;height:48px;background:#999999;"></div>
<div style="left:711px;top:121px;width:2px;height:48px;background:#999999;"></div>
<div style="left:296px;top:121px;width:81px;height:2px;background:#cccccc;"></div>
<div class="t" style="left:300px;top:116px;font-size:12px;font-weight:700;color:#000;letter-spacing:-0.2px;">Номера карт</div>
<div style="left:299px;top:135px;width:404px;height:23px;background:#ffffff;"></div>
<div style="left:300px;top:136px;width:404px;height:1px;background:#ffffff;"></div>
<div style="left:300px;top:158px;width:404px;height:1px;background:#ffffff;"></div>
<div style="left:300px;top:136px;width:1px;height:23px;background:#ffffff;"></div>
<div style="left:703px;top:136px;width:1px;height:23px;background:#ffffff;"></div>
<div style="left:299px;top:135px;width:404px;height:1px;background:#666666;"></div>
<div style="left:299px;top:157px;width:404px;height:1px;background:#666666;"></div>
<div style="left:299px;top:135px;width:1px;height:23px;background:#666666;"></div>
<div style="left:702px;top:135px;width:1px;height:23px;background:#666666;"></div>
<div style="left:717px;top:121px;width:311px;height:2px;background:#999999;"></div>
<div style="left:717px;top:167px;width:311px;height:2px;background:#999999;"></div>
<div style="left:717px;top:121px;width:2px;height:48px;background:#999999;"></div>
<div style="left:1026px;top:121px;width:2px;height:48px;background:#999999;"></div>
<div style="left:723px;top:121px;width:53px;height:2px;background:#cccccc;"></div>
<div class="t" style="left:727px;top:116px;font-size:12px;font-weight:700;color:#000;letter-spacing:-0.2px;">Фильтр</div>
<div class="t" style="left:726px;top:141px;font-size:12px;font-weight:700;color:#000;letter-spacing:-0.5px;">Статус:</div>
<div style="left:772px;top:135px;width:100px;height:25px;background:#cccccc;"></div>
<div style="left:773px;top:136px;width:99px;height:1px;background:#ffffff;"></div>
<div style="left:773px;top:159px;width:99px;height:1px;background:#ffffff;"></div>
<div style="left:773px;top:136px;width:1px;height:24px;background:#ffffff;"></div>
<div style="left:871px;top:136px;width:1px;height:24px;background:#ffffff;"></div>
<div style="left:772px;top:135px;width:99px;height:1px;background:#666666;"></div>
<div style="left:772px;top:158px;width:99px;height:1px;background:#666666;"></div>
<div style="left:772px;top:135px;width:1px;height:24px;background:#666666;"></div>
<div style="left:870px;top:135px;width:1px;height:24px;background:#666666;"></div>
<div class="t" style="left:777px;top:141px;font-size:12px;font-weight:700;color:#000;letter-spacing:0px;">все</div>
<svg style="left:855px;top:144px" width="10" height="5"><path d="M0 0h10v1h-10zM1 1h8v1h-8zM2 2h6v1h-6zM3 3h4v1h-4zM4 4h2v1h-2z" fill="#000"/></svg>
<div style="left:882px;top:135px;width:137px;height:25px;background:#cccccc;"></div>
<div style="left:883px;top:136px;width:136px;height:1px;background:#ffffff;"></div>
<div style="left:883px;top:159px;width:136px;height:1px;background:#ffffff;"></div>
<div style="left:883px;top:136px;width:1px;height:24px;background:#ffffff;"></div>
<div style="left:1018px;top:136px;width:1px;height:24px;background:#ffffff;"></div>
<div style="left:882px;top:135px;width:136px;height:1px;background:#666666;"></div>
<div style="left:882px;top:158px;width:136px;height:1px;background:#666666;"></div>
<div style="left:882px;top:135px;width:1px;height:24px;background:#666666;"></div>
<div style="left:1017px;top:135px;width:1px;height:24px;background:#666666;"></div>
<div class="t" style="left:887px;top:141px;font-size:12px;font-weight:700;color:#000;letter-spacing:0px;">все</div>
<svg style="left:1002px;top:144px" width="10" height="5"><path d="M0 0h10v1h-10zM1 1h8v1h-8zM2 2h6v1h-6zM3 3h4v1h-4zM4 4h2v1h-2z" fill="#000"/></svg>
<div style="left:293px;top:176px;width:92px;height:26px;background:#cccccc;"></div>
<div style="left:294px;top:177px;width:91px;height:1px;background:#ffffff;"></div>
<div style="left:294px;top:201px;width:91px;height:1px;background:#ffffff;"></div>
<div style="left:294px;top:177px;width:1px;height:25px;background:#ffffff;"></div>
<div style="left:384px;top:177px;width:1px;height:25px;background:#ffffff;"></div>
<div style="left:293px;top:176px;width:91px;height:1px;background:#666666;"></div>
<div style="left:293px;top:200px;width:91px;height:1px;background:#666666;"></div>
<div style="left:293px;top:176px;width:1px;height:25px;background:#666666;"></div>
<div style="left:383px;top:176px;width:1px;height:25px;background:#666666;"></div>
<div class="t" style="left:294px;width:90px;text-align:center;top:183px;font-size:12px;font-weight:700;letter-spacing:-0.2px">Загрузить</div>
<div style="left:390px;top:176px;width:120px;height:26px;background:#cccccc;"></div>
<div style="left:391px;top:177px;width:119px;height:1px;background:#ffffff;"></div>
<div style="left:391px;top:201px;width:119px;height:1px;background:#ffffff;"></div>
<div style="left:391px;top:177px;width:1px;height:25px;background:#ffffff;"></div>
<div style="left:509px;top:177px;width:1px;height:25px;background:#ffffff;"></div>
<div style="left:390px;top:176px;width:119px;height:1px;background:#666666;"></div>
<div style="left:390px;top:200px;width:119px;height:1px;background:#666666;"></div>
<div style="left:390px;top:176px;width:1px;height:25px;background:#666666;"></div>
<div style="left:508px;top:176px;width:1px;height:25px;background:#666666;"></div>
<div class="t" style="left:391px;width:118px;text-align:center;top:183px;font-size:12px;font-weight:700;letter-spacing:-0.2px">Передать дил.</div>
<div style="left:515px;top:176px;width:120px;height:26px;background:#cccccc;"></div>
<div style="left:516px;top:177px;width:119px;height:1px;background:#ffffff;"></div>
<div style="left:516px;top:201px;width:119px;height:1px;background:#ffffff;"></div>
<div style="left:516px;top:177px;width:1px;height:25px;background:#ffffff;"></div>
<div style="left:634px;top:177px;width:1px;height:25px;background:#ffffff;"></div>
<div style="left:515px;top:176px;width:119px;height:1px;background:#666666;"></div>
<div style="left:515px;top:200px;width:119px;height:1px;background:#666666;"></div>
<div style="left:515px;top:176px;width:1px;height:25px;background:#666666;"></div>
<div style="left:633px;top:176px;width:1px;height:25px;background:#666666;"></div>
<div class="t" style="left:516px;width:118px;text-align:center;top:183px;font-size:12px;font-weight:700;letter-spacing:-0.2px">Забрать у дил.</div>
<div style="left:733px;top:176px;width:55px;height:26px;background:#cccccc;"></div>
<div style="left:734px;top:177px;width:54px;height:1px;background:#ffffff;"></div>
<div style="left:734px;top:201px;width:54px;height:1px;background:#ffffff;"></div>
<div style="left:734px;top:177px;width:1px;height:25px;background:#ffffff;"></div>
<div style="left:787px;top:177px;width:1px;height:25px;background:#ffffff;"></div>
<div style="left:733px;top:176px;width:54px;height:1px;background:#666666;"></div>
<div style="left:733px;top:200px;width:54px;height:1px;background:#666666;"></div>
<div style="left:733px;top:176px;width:1px;height:25px;background:#666666;"></div>
<div style="left:786px;top:176px;width:1px;height:25px;background:#666666;"></div>
<div class="t" style="left:734px;width:53px;text-align:center;top:183px;font-size:12px;font-weight:700;letter-spacing:-0.2px">>>></div>
<div style="left:793px;top:176px;width:42px;height:26px;background:#cccccc;"></div>
<div style="left:794px;top:177px;width:41px;height:1px;background:#ffffff;"></div>
<div style="left:794px;top:201px;width:41px;height:1px;background:#ffffff;"></div>
<div style="left:794px;top:177px;width:1px;height:25px;background:#ffffff;"></div>
<div style="left:834px;top:177px;width:1px;height:25px;background:#ffffff;"></div>
<div style="left:793px;top:176px;width:41px;height:1px;background:#666666;"></div>
<div style="left:793px;top:200px;width:41px;height:1px;background:#666666;"></div>
<div style="left:793px;top:176px;width:1px;height:25px;background:#666666;"></div>
<div style="left:833px;top:176px;width:1px;height:25px;background:#666666;"></div>
<div class="t" style="left:794px;width:40px;text-align:center;top:183px;font-size:12px;font-weight:700;letter-spacing:-0.2px">X</div>
<div style="left:840px;top:176px;width:26px;height:26px;background:#cccccc;"></div>
<div style="left:841px;top:177px;width:25px;height:1px;background:#ffffff;"></div>
<div style="left:841px;top:201px;width:25px;height:1px;background:#ffffff;"></div>
<div style="left:841px;top:177px;width:1px;height:25px;background:#ffffff;"></div>
<div style="left:865px;top:177px;width:1px;height:25px;background:#ffffff;"></div>
<div style="left:840px;top:176px;width:25px;height:1px;background:#666666;"></div>
<div style="left:840px;top:200px;width:25px;height:1px;background:#666666;"></div>
<div style="left:840px;top:176px;width:1px;height:25px;background:#666666;"></div>
<div style="left:864px;top:176px;width:1px;height:25px;background:#666666;"></div>
<div style="left:866px;top:176px;width:26px;height:26px;background:#cccccc;"></div>
<div style="left:867px;top:177px;width:25px;height:1px;background:#ffffff;"></div>
<div style="left:867px;top:201px;width:25px;height:1px;background:#ffffff;"></div>
<div style="left:867px;top:177px;width:1px;height:25px;background:#ffffff;"></div>
<div style="left:891px;top:177px;width:1px;height:25px;background:#ffffff;"></div>
<div style="left:866px;top:176px;width:25px;height:1px;background:#666666;"></div>
<div style="left:866px;top:200px;width:25px;height:1px;background:#666666;"></div>
<div style="left:866px;top:176px;width:1px;height:25px;background:#666666;"></div>
<div style="left:890px;top:176px;width:1px;height:25px;background:#666666;"></div>
<div style="left:973px;top:176px;width:26px;height:26px;background:#cccccc;"></div>
<div style="left:974px;top:177px;width:25px;height:1px;background:#ffffff;"></div>
<div style="left:974px;top:201px;width:25px;height:1px;background:#ffffff;"></div>
<div style="left:974px;top:177px;width:1px;height:25px;background:#ffffff;"></div>
<div style="left:998px;top:177px;width:1px;height:25px;background:#ffffff;"></div>
<div style="left:973px;top:176px;width:25px;height:1px;background:#666666;"></div>
<div style="left:973px;top:200px;width:25px;height:1px;background:#666666;"></div>
<div style="left:973px;top:176px;width:1px;height:25px;background:#666666;"></div>
<div style="left:997px;top:176px;width:1px;height:25px;background:#666666;"></div>
<div style="left:999px;top:176px;width:26px;height:26px;background:#cccccc;"></div>
<div style="left:1000px;top:177px;width:25px;height:1px;background:#ffffff;"></div>
<div style="left:1000px;top:201px;width:25px;height:1px;background:#ffffff;"></div>
<div style="left:1000px;top:177px;width:1px;height:25px;background:#ffffff;"></div>
<div style="left:1024px;top:177px;width:1px;height:25px;background:#ffffff;"></div>
<div style="left:999px;top:176px;width:25px;height:1px;background:#666666;"></div>
<div style="left:999px;top:200px;width:25px;height:1px;background:#666666;"></div>
<div style="left:999px;top:176px;width:1px;height:25px;background:#666666;"></div>
<div style="left:1023px;top:176px;width:1px;height:25px;background:#666666;"></div>
<div style="left:892px;top:176px;width:81px;height:1px;background:#999999;"></div>
<div style="left:892px;top:201px;width:81px;height:1px;background:#999999;"></div>
<div style="left:892px;top:176px;width:1px;height:26px;background:#999999;"></div>
<div style="left:972px;top:176px;width:1px;height:26px;background:#999999;"></div>
<div class="t" style="left:893px;width:79px;text-align:center;top:183px;font-size:12px;font-weight:400;letter-spacing:0px">1 из 64</div>
<div style="left:848px;top:186px;width:1px;height:7px;background:#000;"></div>
<svg style="left:0px;top:0px;shape-rendering:geometricPrecision" width="1046" height="680"><polygon points="858,186 858,193 851,189.5" fill="#000"/></svg>
<svg style="left:0px;top:0px;shape-rendering:geometricPrecision" width="1046" height="680"><polygon points="882,186 882,193 874,189.5" fill="#000"/></svg>
<svg style="left:0px;top:0px;shape-rendering:geometricPrecision" width="1046" height="680"><polygon points="983,186 983,193 991,189.5" fill="#000"/></svg>
<svg style="left:0px;top:0px;shape-rendering:geometricPrecision" width="1046" height="680"><polygon points="1007,186 1007,193 1015,189.5" fill="#000"/></svg>
<div style="left:1016px;top:186px;width:1px;height:7px;background:#000;"></div>
<div style="left:293px;top:207px;width:732px;height:405px;background:#ffffff;"></div>
<div style="left:293px;top:207px;width:731px;height:1px;background:#666666;"></div>
<div style="left:293px;top:207px;width:1px;height:404px;background:#666666;"></div>
<div style="left:293px;top:611px;width:732px;height:1px;background:#ffffff;"></div>
<div style="left:1024px;top:207px;width:1px;height:405px;background:#ffffff;"></div>
<div style="left:293px;top:610px;width:731px;height:1px;background:#666666;"></div>
<div style="left:1023px;top:207px;width:1px;height:404px;background:#666666;"></div>
<div style="left:294px;top:208px;width:729px;height:16px;background:#cccccc;"></div>
<div style="left:294px;top:208px;width:149px;height:1px;background:#ffffff;"></div>
<div style="left:294px;top:208px;width:1px;height:15px;background:#ffffff;"></div>
<div style="left:443px;top:208px;width:1px;height:16px;background:#666666;"></div>
<div class="t" style="left:294px;width:149px;text-align:center;top:210px;font-size:12px;font-weight:400;letter-spacing:0px">Номер</div>
<div style="left:444px;top:208px;width:195px;height:1px;background:#ffffff;"></div>
<div style="left:444px;top:208px;width:1px;height:15px;background:#ffffff;"></div>
<div style="left:639px;top:208px;width:1px;height:16px;background:#666666;"></div>
<div class="t" style="left:444px;width:195px;text-align:center;top:210px;font-size:12px;font-weight:400;letter-spacing:0px">Договор</div>
<div style="left:640px;top:208px;width:165px;height:1px;background:#ffffff;"></div>
<div style="left:640px;top:208px;width:1px;height:15px;background:#ffffff;"></div>
<div style="left:805px;top:208px;width:1px;height:16px;background:#666666;"></div>
<div class="t" style="left:640px;width:165px;text-align:center;top:210px;font-size:12px;font-weight:400;letter-spacing:0px">С даты</div>
<div style="left:806px;top:208px;width:202px;height:1px;background:#ffffff;"></div>
<div style="left:806px;top:208px;width:1px;height:15px;background:#ffffff;"></div>
<div class="t" style="left:806px;width:244px;text-align:center;top:210px;font-size:12px;font-weight:400;letter-spacing:0px">Дилер</div>
<div style="left:294px;top:223px;width:715px;height:1px;background:#666666;"></div>
<div style="left:294px;top:239px;width:714px;height:1px;background:#999999;"></div>
<div class="t" style="left:296px;top:225px;font-size:12px;font-weight:400"><span style="display:inline-block;width:7px">1</span></div>
<div class="t" style="left:446px;top:225px;font-size:12px;font-weight:400"><span style="display:inline-block;width:9px">Ц</span><span style="display:inline-block;width:7px">Т</span><span style="display:inline-block;width:8px">В</span><span style="display:inline-block;width:7px">_</span><span style="display:inline-block;width:7px">Т</span><span style="display:inline-block;width:8px">Е</span><span style="display:inline-block;width:9px">С</span><span style="display:inline-block;width:7px">Т</span><span style="display:inline-block;width:7px">1</span></div>
<div class="t" style="left:642px;top:225px;font-size:12px;font-weight:400"><span style="display:inline-block;width:7px">1</span><span style="display:inline-block;width:7px">7</span><span style="display:inline-block;width:3px">.</span><span style="display:inline-block;width:7px">0</span><span style="display:inline-block;width:7px">1</span><span style="display:inline-block;width:3px">.</span><span style="display:inline-block;width:7px">2</span><span style="display:inline-block;width:7px">0</span><span style="display:inline-block;width:7px">0</span><span style="display:inline-block;width:7px">6</span></div>
<div class="t" style="left:808px;top:225px;font-size:12px;font-weight:400"><span style="display:inline-block;width:9px">U</span><span style="display:inline-block;width:7px">F</span><span style="display:inline-block;width:8px">A</span><span style="display:inline-block;width:9px">N</span><span style="display:inline-block;width:8px">E</span><span style="display:inline-block;width:7px">T</span></div>
<div style="left:294px;top:255px;width:714px;height:1px;background:#999999;"></div>
<div class="t" style="left:296px;top:241px;font-size:12px;font-weight:400"><span style="display:inline-block;width:7px">2</span></div>
<div class="t" style="left:446px;top:241px;font-size:12px;font-weight:400"><span style="display:inline-block;width:9px">Ц</span><span style="display:inline-block;width:7px">Т</span><span style="display:inline-block;width:8px">В</span><span style="display:inline-block;width:7px">_</span><span style="display:inline-block;width:7px">Т</span><span style="display:inline-block;width:8px">Е</span><span style="display:inline-block;width:9px">С</span><span style="display:inline-block;width:7px">Т</span><span style="display:inline-block;width:7px">2</span></div>
<div class="t" style="left:642px;top:241px;font-size:12px;font-weight:400"><span style="display:inline-block;width:7px">2</span><span style="display:inline-block;width:7px">0</span><span style="display:inline-block;width:3px">.</span><span style="display:inline-block;width:7px">0</span><span style="display:inline-block;width:7px">1</span><span style="display:inline-block;width:3px">.</span><span style="display:inline-block;width:7px">2</span><span style="display:inline-block;width:7px">0</span><span style="display:inline-block;width:7px">0</span><span style="display:inline-block;width:7px">6</span></div>
<div class="t" style="left:808px;top:241px;font-size:12px;font-weight:400"><span style="display:inline-block;width:9px">U</span><span style="display:inline-block;width:7px">F</span><span style="display:inline-block;width:8px">A</span><span style="display:inline-block;width:9px">N</span><span style="display:inline-block;width:8px">E</span><span style="display:inline-block;width:7px">T</span></div>
<div style="left:294px;top:271px;width:714px;height:1px;background:#999999;"></div>
<div class="t" style="left:296px;top:257px;font-size:12px;font-weight:400"><span style="display:inline-block;width:7px">3</span></div>
<div class="t" style="left:446px;top:257px;font-size:12px;font-weight:400"><span style="display:inline-block;width:9px">Ц</span><span style="display:inline-block;width:7px">Т</span><span style="display:inline-block;width:8px">В</span><span style="display:inline-block;width:7px">_</span><span style="display:inline-block;width:7px">Т</span><span style="display:inline-block;width:8px">Е</span><span style="display:inline-block;width:9px">С</span><span style="display:inline-block;width:7px">Т</span><span style="display:inline-block;width:7px">3</span></div>
<div class="t" style="left:642px;top:257px;font-size:12px;font-weight:400"><span style="display:inline-block;width:7px">2</span><span style="display:inline-block;width:7px">0</span><span style="display:inline-block;width:3px">.</span><span style="display:inline-block;width:7px">0</span><span style="display:inline-block;width:7px">1</span><span style="display:inline-block;width:3px">.</span><span style="display:inline-block;width:7px">2</span><span style="display:inline-block;width:7px">0</span><span style="display:inline-block;width:7px">0</span><span style="display:inline-block;width:7px">6</span></div>
<div class="t" style="left:808px;top:257px;font-size:12px;font-weight:400"><span style="display:inline-block;width:9px">U</span><span style="display:inline-block;width:7px">F</span><span style="display:inline-block;width:8px">A</span><span style="display:inline-block;width:9px">N</span><span style="display:inline-block;width:8px">E</span><span style="display:inline-block;width:7px">T</span></div>
<div style="left:294px;top:287px;width:714px;height:1px;background:#999999;"></div>
<div class="t" style="left:296px;top:273px;font-size:12px;font-weight:400"><span style="display:inline-block;width:7px">4</span></div>
<div class="t" style="left:446px;top:273px;font-size:12px;font-weight:400"><span style="display:inline-block;width:9px">Ц</span><span style="display:inline-block;width:7px">Т</span><span style="display:inline-block;width:8px">В</span><span style="display:inline-block;width:7px">_</span><span style="display:inline-block;width:7px">Т</span><span style="display:inline-block;width:8px">Е</span><span style="display:inline-block;width:9px">С</span><span style="display:inline-block;width:7px">Т</span><span style="display:inline-block;width:7px">4</span></div>
<div class="t" style="left:642px;top:273px;font-size:12px;font-weight:400"><span style="display:inline-block;width:7px">2</span><span style="display:inline-block;width:7px">0</span><span style="display:inline-block;width:3px">.</span><span style="display:inline-block;width:7px">0</span><span style="display:inline-block;width:7px">1</span><span style="display:inline-block;width:3px">.</span><span style="display:inline-block;width:7px">2</span><span style="display:inline-block;width:7px">0</span><span style="display:inline-block;width:7px">0</span><span style="display:inline-block;width:7px">6</span></div>
<div class="t" style="left:808px;top:273px;font-size:12px;font-weight:400"><span style="display:inline-block;width:9px">U</span><span style="display:inline-block;width:7px">F</span><span style="display:inline-block;width:8px">A</span><span style="display:inline-block;width:9px">N</span><span style="display:inline-block;width:8px">E</span><span style="display:inline-block;width:7px">T</span></div>
<div style="left:294px;top:303px;width:714px;height:1px;background:#999999;"></div>
<div class="t" style="left:296px;top:289px;font-size:12px;font-weight:400"><span style="display:inline-block;width:7px">5</span></div>
<div class="t" style="left:446px;top:289px;font-size:12px;font-weight:400"><span style="display:inline-block;width:9px">Ц</span><span style="display:inline-block;width:7px">Т</span><span style="display:inline-block;width:8px">В</span><span style="display:inline-block;width:7px">_</span><span style="display:inline-block;width:7px">Т</span><span style="display:inline-block;width:8px">Е</span><span style="display:inline-block;width:9px">С</span><span style="display:inline-block;width:7px">Т</span><span style="display:inline-block;width:7px">5</span></div>
<div class="t" style="left:642px;top:289px;font-size:12px;font-weight:400"><span style="display:inline-block;width:7px">2</span><span style="display:inline-block;width:7px">0</span><span style="display:inline-block;width:3px">.</span><span style="display:inline-block;width:7px">0</span><span style="display:inline-block;width:7px">1</span><span style="display:inline-block;width:3px">.</span><span style="display:inline-block;width:7px">2</span><span style="display:inline-block;width:7px">0</span><span style="display:inline-block;width:7px">0</span><span style="display:inline-block;width:7px">6</span></div>
<div class="t" style="left:808px;top:289px;font-size:12px;font-weight:400"><span style="display:inline-block;width:9px">U</span><span style="display:inline-block;width:7px">F</span><span style="display:inline-block;width:8px">A</span><span style="display:inline-block;width:9px">N</span><span style="display:inline-block;width:8px">E</span><span style="display:inline-block;width:7px">T</span></div>
<div style="left:294px;top:319px;width:714px;height:1px;background:#999999;"></div>
<div class="t" style="left:296px;top:305px;font-size:12px;font-weight:400"><span style="display:inline-block;width:7px">6</span></div>
<div class="t" style="left:446px;top:305px;font-size:12px;font-weight:400"><span style="display:inline-block;width:9px">Ц</span><span style="display:inline-block;width:7px">Т</span><span style="display:inline-block;width:8px">В</span><span style="display:inline-block;width:7px">_</span><span style="display:inline-block;width:7px">Т</span><span style="display:inline-block;width:8px">Е</span><span style="display:inline-block;width:9px">С</span><span style="display:inline-block;width:7px">Т</span><span style="display:inline-block;width:7px">6</span></div>
<div class="t" style="left:642px;top:305px;font-size:12px;font-weight:400"><span style="display:inline-block;width:7px">2</span><span style="display:inline-block;width:7px">0</span><span style="display:inline-block;width:3px">.</span><span style="display:inline-block;width:7px">0</span><span style="display:inline-block;width:7px">1</span><span style="display:inline-block;width:3px">.</span><span style="display:inline-block;width:7px">2</span><span style="display:inline-block;width:7px">0</span><span style="display:inline-block;width:7px">0</span><span style="display:inline-block;width:7px">6</span></div>
<div class="t" style="left:808px;top:305px;font-size:12px;font-weight:400"><span style="display:inline-block;width:9px">U</span><span style="display:inline-block;width:7px">F</span><span style="display:inline-block;width:8px">A</span><span style="display:inline-block;width:9px">N</span><span style="display:inline-block;width:8px">E</span><span style="display:inline-block;width:7px">T</span></div>
<div style="left:294px;top:335px;width:714px;height:1px;background:#999999;"></div>
<div class="t" style="left:296px;top:321px;font-size:12px;font-weight:400"><span style="display:inline-block;width:7px">7</span></div>
<div class="t" style="left:446px;top:321px;font-size:12px;font-weight:400"><span style="display:inline-block;width:9px">Ц</span><span style="display:inline-block;width:7px">Т</span><span style="display:inline-block;width:8px">В</span><span style="display:inline-block;width:7px">_</span><span style="display:inline-block;width:7px">Т</span><span style="display:inline-block;width:8px">Е</span><span style="display:inline-block;width:9px">С</span><span style="display:inline-block;width:7px">Т</span><span style="display:inline-block;width:7px">7</span></div>
<div class="t" style="left:642px;top:321px;font-size:12px;font-weight:400"><span style="display:inline-block;width:7px">0</span><span style="display:inline-block;width:7px">3</span><span style="display:inline-block;width:3px">.</span><span style="display:inline-block;width:7px">0</span><span style="display:inline-block;width:7px">2</span><span style="display:inline-block;width:3px">.</span><span style="display:inline-block;width:7px">2</span><span style="display:inline-block;width:7px">0</span><span style="display:inline-block;width:7px">0</span><span style="display:inline-block;width:7px">6</span></div>
<div class="t" style="left:808px;top:321px;font-size:12px;font-weight:400"><span style="display:inline-block;width:9px">U</span><span style="display:inline-block;width:7px">F</span><span style="display:inline-block;width:8px">A</span><span style="display:inline-block;width:9px">N</span><span style="display:inline-block;width:8px">E</span><span style="display:inline-block;width:7px">T</span></div>
<div style="left:294px;top:351px;width:714px;height:1px;background:#999999;"></div>
<div class="t" style="left:296px;top:337px;font-size:12px;font-weight:400"><span style="display:inline-block;width:7px">8</span></div>
<div class="t" style="left:446px;top:337px;font-size:12px;font-weight:400"><span style="display:inline-block;width:9px">Ц</span><span style="display:inline-block;width:7px">Т</span><span style="display:inline-block;width:8px">В</span><span style="display:inline-block;width:7px">_</span><span style="display:inline-block;width:7px">Т</span><span style="display:inline-block;width:8px">Е</span><span style="display:inline-block;width:9px">С</span><span style="display:inline-block;width:7px">Т</span><span style="display:inline-block;width:7px">8</span></div>
<div class="t" style="left:642px;top:337px;font-size:12px;font-weight:400"><span style="display:inline-block;width:7px">2</span><span style="display:inline-block;width:7px">0</span><span style="display:inline-block;width:3px">.</span><span style="display:inline-block;width:7px">0</span><span style="display:inline-block;width:7px">1</span><span style="display:inline-block;width:3px">.</span><span style="display:inline-block;width:7px">2</span><span style="display:inline-block;width:7px">0</span><span style="display:inline-block;width:7px">0</span><span style="display:inline-block;width:7px">6</span></div>
<div class="t" style="left:808px;top:337px;font-size:12px;font-weight:400"><span style="display:inline-block;width:9px">U</span><span style="display:inline-block;width:7px">F</span><span style="display:inline-block;width:8px">A</span><span style="display:inline-block;width:9px">N</span><span style="display:inline-block;width:8px">E</span><span style="display:inline-block;width:7px">T</span></div>
<div style="left:294px;top:367px;width:714px;height:1px;background:#999999;"></div>
<div class="t" style="left:296px;top:353px;font-size:12px;font-weight:400"><span style="display:inline-block;width:7px">9</span></div>
<div class="t" style="left:446px;top:353px;font-size:12px;font-weight:400"><span style="display:inline-block;width:9px">Ц</span><span style="display:inline-block;width:7px">Т</span><span style="display:inline-block;width:8px">В</span><span style="display:inline-block;width:7px">_</span><span style="display:inline-block;width:7px">Т</span><span style="display:inline-block;width:8px">Е</span><span style="display:inline-block;width:9px">С</span><span style="display:inline-block;width:7px">Т</span><span style="display:inline-block;width:7px">9</span></div>
<div class="t" style="left:642px;top:353px;font-size:12px;font-weight:400"><span style="display:inline-block;width:7px">2</span><span style="display:inline-block;width:7px">0</span><span style="display:inline-block;width:3px">.</span><span style="display:inline-block;width:7px">0</span><span style="display:inline-block;width:7px">1</span><span style="display:inline-block;width:3px">.</span><span style="display:inline-block;width:7px">2</span><span style="display:inline-block;width:7px">0</span><span style="display:inline-block;width:7px">0</span><span style="display:inline-block;width:7px">6</span></div>
<div class="t" style="left:808px;top:353px;font-size:12px;font-weight:400"><span style="display:inline-block;width:9px">U</span><span style="display:inline-block;width:7px">F</span><span style="display:inline-block;width:8px">A</span><span style="display:inline-block;width:9px">N</span><span style="display:inline-block;width:8px">E</span><span style="display:inline-block;width:7px">T</span></div>
<div style="left:294px;top:383px;width:714px;height:1px;background:#999999;"></div>
<div class="t" style="left:296px;top:369px;font-size:12px;font-weight:400"><span style="display:inline-block;width:7px">1</span><span style="display:inline-block;width:7px">0</span></div>
<div class="t" style="left:446px;top:369px;font-size:12px;font-weight:400"><span style="display:inline-block;width:3px">!</span><span style="display:inline-block;width:3px">!</span><span style="display:inline-block;width:3px">!</span><span style="display:inline-block;width:3px">!</span><span style="display:inline-block;width:3px">!</span><span style="display:inline-block;width:3px">!</span><span style="display:inline-block;width:3px">!</span><span style="display:inline-block;width:3px">!</span><span style="display:inline-block;width:3px">!</span><span style="display:inline-block;width:3px">!</span><span style="display:inline-block;width:3px">&nbsp;</span><span style="display:inline-block;width:7px">н</span><span style="display:inline-block;width:7px">е</span><span style="display:inline-block;width:3px">&nbsp;</span><span style="display:inline-block;width:5px">т</span><span style="display:inline-block;width:7px">р</span><span style="display:inline-block;width:7px">о</span><span style="display:inline-block;width:4px">г</span><span style="display:inline-block;width:7px">а</span><span style="display:inline-block;width:5px">т</span><span style="display:inline-block;width:6px">ь</span><span style="display:inline-block;width:3px">!</span><span style="display:inline-block;width:3px">!</span><span style="display:inline-block;width:3px">!</span><span style="display:inline-block;width:3px">!</span><span style="display:inline-block;width:9px">Ц</span><span style="display:inline-block;width:7px">Т</span><span style="display:inline-block;width:8px">В</span><span style="display:inline-block;width:7px">_</span><span style="display:inline-block;width:7px">Т</span><span style="display:inline-block;width:8px">Е</span><span style="display:inline-block;width:9px">С</span><span style="display:inline-block;width:7px">Т</span><span style="display:inline-block;width:7px">1</span><span style="display:inline-block;width:7px">0</span></div>
<div class="t" style="left:642px;top:369px;font-size:12px;font-weight:400"><span style="display:inline-block;width:7px">2</span><span style="display:inline-block;width:7px">0</span><span style="display:inline-block;width:3px">.</span><span style="display:inline-block;width:7px">0</span><span style="display:inline-block;width:7px">1</span><span style="display:inline-block;width:3px">.</span><span style="display:inline-block;width:7px">2</span><span style="display:inline-block;width:7px">0</span><span style="display:inline-block;width:7px">0</span><span style="display:inline-block;width:7px">6</span></div>
<div class="t" style="left:808px;top:369px;font-size:12px;font-weight:400"><span style="display:inline-block;width:9px">U</span><span style="display:inline-block;width:7px">F</span><span style="display:inline-block;width:8px">A</span><span style="display:inline-block;width:9px">N</span><span style="display:inline-block;width:8px">E</span><span style="display:inline-block;width:7px">T</span></div>
<div style="left:294px;top:399px;width:714px;height:1px;background:#999999;"></div>
<div class="t" style="left:296px;top:385px;font-size:12px;font-weight:400"><span style="display:inline-block;width:7px">1</span><span style="display:inline-block;width:7px">0</span><span style="display:inline-block;width:7px">0</span></div>
<div class="t" style="left:446px;top:385px;font-size:12px;font-weight:400"><span style="display:inline-block;width:7px">К</span><span style="display:inline-block;width:9px">Ф</span><span style="display:inline-block;width:7px">4</span><span style="display:inline-block;width:7px">3</span><span style="display:inline-block;width:7px">2</span><span style="display:inline-block;width:7px">5</span><span style="display:inline-block;width:7px">5</span><span style="display:inline-block;width:4px">-</span><span style="display:inline-block;width:7px">0</span><span style="display:inline-block;width:7px">5</span></div>
<div class="t" style="left:642px;top:385px;font-size:12px;font-weight:400"><span style="display:inline-block;width:7px">0</span><span style="display:inline-block;width:7px">1</span><span style="display:inline-block;width:3px">.</span><span style="display:inline-block;width:7px">0</span><span style="display:inline-block;width:7px">4</span><span style="display:inline-block;width:3px">.</span><span style="display:inline-block;width:7px">2</span><span style="display:inline-block;width:7px">0</span><span style="display:inline-block;width:7px">0</span><span style="display:inline-block;width:7px">6</span></div>
<div class="t" style="left:808px;top:385px;font-size:12px;font-weight:400"><span style="display:inline-block;width:9px">U</span><span style="display:inline-block;width:7px">F</span><span style="display:inline-block;width:8px">A</span><span style="display:inline-block;width:9px">N</span><span style="display:inline-block;width:8px">E</span><span style="display:inline-block;width:7px">T</span></div>
<div style="left:294px;top:415px;width:714px;height:1px;background:#999999;"></div>
<div class="t" style="left:296px;top:401px;font-size:12px;font-weight:400"><span style="display:inline-block;width:7px">1</span><span style="display:inline-block;width:7px">0</span><span style="display:inline-block;width:7px">1</span></div>
<div class="t" style="left:446px;top:401px;font-size:12px;font-weight:400"><span style="display:inline-block;width:7px">К</span><span style="display:inline-block;width:9px">Ф</span><span style="display:inline-block;width:7px">4</span><span style="display:inline-block;width:7px">9</span><span style="display:inline-block;width:7px">7</span><span style="display:inline-block;width:7px">6</span><span style="display:inline-block;width:7px">9</span><span style="display:inline-block;width:4px">-</span><span style="display:inline-block;width:7px">0</span><span style="display:inline-block;width:7px">5</span></div>
<div class="t" style="left:642px;top:401px;font-size:12px;font-weight:400"><span style="display:inline-block;width:7px">0</span><span style="display:inline-block;width:7px">1</span><span style="display:inline-block;width:3px">.</span><span style="display:inline-block;width:7px">0</span><span style="display:inline-block;width:7px">4</span><span style="display:inline-block;width:3px">.</span><span style="display:inline-block;width:7px">2</span><span style="display:inline-block;width:7px">0</span><span style="display:inline-block;width:7px">0</span><span style="display:inline-block;width:7px">6</span></div>
<div class="t" style="left:808px;top:401px;font-size:12px;font-weight:400"><span style="display:inline-block;width:9px">U</span><span style="display:inline-block;width:7px">F</span><span style="display:inline-block;width:8px">A</span><span style="display:inline-block;width:9px">N</span><span style="display:inline-block;width:8px">E</span><span style="display:inline-block;width:7px">T</span></div>
<div style="left:294px;top:431px;width:714px;height:1px;background:#999999;"></div>
<div class="t" style="left:296px;top:417px;font-size:12px;font-weight:400"><span style="display:inline-block;width:7px">1</span><span style="display:inline-block;width:7px">0</span><span style="display:inline-block;width:7px">2</span></div>
<div class="t" style="left:446px;top:417px;font-size:12px;font-weight:400"><span style="display:inline-block;width:7px">К</span><span style="display:inline-block;width:9px">Ф</span><span style="display:inline-block;width:7px">1</span><span style="display:inline-block;width:7px">4</span><span style="display:inline-block;width:7px">0</span><span style="display:inline-block;width:7px">9</span><span style="display:inline-block;width:7px">9</span><span style="display:inline-block;width:7px">5</span><span style="display:inline-block;width:4px">-</span><span style="display:inline-block;width:7px">0</span><span style="display:inline-block;width:7px">6</span></div>
<div class="t" style="left:642px;top:417px;font-size:12px;font-weight:400"><span style="display:inline-block;width:7px">0</span><span style="display:inline-block;width:7px">3</span><span style="display:inline-block;width:3px">.</span><span style="display:inline-block;width:7px">0</span><span style="display:inline-block;width:7px">4</span><span style="display:inline-block;width:3px">.</span><span style="display:inline-block;width:7px">2</span><span style="display:inline-block;width:7px">0</span><span style="display:inline-block;width:7px">0</span><span style="display:inline-block;width:7px">6</span></div>
<div class="t" style="left:808px;top:417px;font-size:12px;font-weight:400"><span style="display:inline-block;width:9px">U</span><span style="display:inline-block;width:7px">F</span><span style="display:inline-block;width:8px">A</span><span style="display:inline-block;width:9px">N</span><span style="display:inline-block;width:8px">E</span><span style="display:inline-block;width:7px">T</span></div>
<div style="left:294px;top:447px;width:714px;height:1px;background:#999999;"></div>
<div class="t" style="left:296px;top:433px;font-size:12px;font-weight:400"><span style="display:inline-block;width:7px">1</span><span style="display:inline-block;width:7px">0</span><span style="display:inline-block;width:7px">3</span></div>
<div class="t" style="left:446px;top:433px;font-size:12px;font-weight:400"><span style="display:inline-block;width:7px">К</span><span style="display:inline-block;width:9px">Ф</span><span style="display:inline-block;width:7px">6</span><span style="display:inline-block;width:7px">9</span><span style="display:inline-block;width:7px">6</span><span style="display:inline-block;width:7px">2</span><span style="display:inline-block;width:4px">-</span><span style="display:inline-block;width:7px">0</span><span style="display:inline-block;width:7px">4</span></div>
<div class="t" style="left:642px;top:433px;font-size:12px;font-weight:400"><span style="display:inline-block;width:7px">0</span><span style="display:inline-block;width:7px">3</span><span style="display:inline-block;width:3px">.</span><span style="display:inline-block;width:7px">0</span><span style="display:inline-block;width:7px">4</span><span style="display:inline-block;width:3px">.</span><span style="display:inline-block;width:7px">2</span><span style="display:inline-block;width:7px">0</span><span style="display:inline-block;width:7px">0</span><span style="display:inline-block;width:7px">6</span></div>
<div class="t" style="left:808px;top:433px;font-size:12px;font-weight:400"><span style="display:inline-block;width:9px">U</span><span style="display:inline-block;width:7px">F</span><span style="display:inline-block;width:8px">A</span><span style="display:inline-block;width:9px">N</span><span style="display:inline-block;width:8px">E</span><span style="display:inline-block;width:7px">T</span></div>
<div style="left:294px;top:463px;width:714px;height:1px;background:#999999;"></div>
<div class="t" style="left:296px;top:449px;font-size:12px;font-weight:400"><span style="display:inline-block;width:7px">1</span><span style="display:inline-block;width:7px">0</span><span style="display:inline-block;width:7px">4</span></div>
<div class="t" style="left:446px;top:449px;font-size:12px;font-weight:400"><span style="display:inline-block;width:9px">Ц</span><span style="display:inline-block;width:9px">Ф</span><span style="display:inline-block;width:7px">1</span><span style="display:inline-block;width:7px">0</span><span style="display:inline-block;width:7px">2</span><span style="display:inline-block;width:7px">7</span><span style="display:inline-block;width:4px">-</span><span style="display:inline-block;width:7px">0</span><span style="display:inline-block;width:7px">6</span></div>
<div class="t" style="left:642px;top:449px;font-size:12px;font-weight:400"><span style="display:inline-block;width:7px">0</span><span style="display:inline-block;width:7px">3</span><span style="display:inline-block;width:3px">.</span><span style="display:inline-block;width:7px">0</span><span style="display:inline-block;width:7px">4</span><span style="display:inline-block;width:3px">.</span><span style="display:inline-block;width:7px">2</span><span style="display:inline-block;width:7px">0</span><span style="display:inline-block;width:7px">0</span><span style="display:inline-block;width:7px">6</span></div>
<div class="t" style="left:808px;top:449px;font-size:12px;font-weight:400"><span style="display:inline-block;width:9px">U</span><span style="display:inline-block;width:7px">F</span><span style="display:inline-block;width:8px">A</span><span style="display:inline-block;width:9px">N</span><span style="display:inline-block;width:8px">E</span><span style="display:inline-block;width:7px">T</span></div>
<div style="left:294px;top:479px;width:714px;height:1px;background:#999999;"></div>
<div class="t" style="left:296px;top:465px;font-size:12px;font-weight:400"><span style="display:inline-block;width:7px">1</span><span style="display:inline-block;width:7px">0</span><span style="display:inline-block;width:7px">5</span></div>
<div class="t" style="left:446px;top:465px;font-size:12px;font-weight:400"><span style="display:inline-block;width:7px">К</span><span style="display:inline-block;width:9px">Ф</span><span style="display:inline-block;width:7px">3</span><span style="display:inline-block;width:7px">0</span><span style="display:inline-block;width:7px">4</span><span style="display:inline-block;width:7px">2</span><span style="display:inline-block;width:4px">-</span><span style="display:inline-block;width:7px">0</span><span style="display:inline-block;width:7px">4</span></div>
<div class="t" style="left:642px;top:465px;font-size:12px;font-weight:400"><span style="display:inline-block;width:7px">0</span><span style="display:inline-block;width:7px">3</span><span style="display:inline-block;width:3px">.</span><span style="display:inline-block;width:7px">0</span><span style="display:inline-block;width:7px">4</span><span style="display:inline-block;width:3px">.</span><span style="display:inline-block;width:7px">2</span><span style="display:inline-block;width:7px">0</span><span style="display:inline-block;width:7px">0</span><span style="display:inline-block;width:7px">6</span></div>
<div class="t" style="left:808px;top:465px;font-size:12px;font-weight:400"><span style="display:inline-block;width:9px">U</span><span style="display:inline-block;width:7px">F</span><span style="display:inline-block;width:8px">A</span><span style="display:inline-block;width:9px">N</span><span style="display:inline-block;width:8px">E</span><span style="display:inline-block;width:7px">T</span></div>
<div style="left:294px;top:495px;width:714px;height:1px;background:#999999;"></div>
<div class="t" style="left:296px;top:481px;font-size:12px;font-weight:400"><span style="display:inline-block;width:7px">1</span><span style="display:inline-block;width:7px">0</span><span style="display:inline-block;width:7px">6</span></div>
<div class="t" style="left:446px;top:481px;font-size:12px;font-weight:400"><span style="display:inline-block;width:7px">К</span><span style="display:inline-block;width:9px">Ф</span><span style="display:inline-block;width:7px">2</span><span style="display:inline-block;width:7px">3</span><span style="display:inline-block;width:7px">1</span><span style="display:inline-block;width:7px">6</span><span style="display:inline-block;width:7px">4</span><span style="display:inline-block;width:4px">-</span><span style="display:inline-block;width:7px">0</span><span style="display:inline-block;width:7px">5</span></div>
<div class="t" style="left:642px;top:481px;font-size:12px;font-weight:400"><span style="display:inline-block;width:7px">0</span><span style="display:inline-block;width:7px">3</span><span style="display:inline-block;width:3px">.</span><span style="display:inline-block;width:7px">0</span><span style="display:inline-block;width:7px">4</span><span style="display:inline-block;width:3px">.</span><span style="display:inline-block;width:7px">2</span><span style="display:inline-block;width:7px">0</span><span style="display:inline-block;width:7px">0</span><span style="display:inline-block;width:7px">6</span></div>
<div class="t" style="left:808px;top:481px;font-size:12px;font-weight:400"><span style="display:inline-block;width:9px">U</span><span style="display:inline-block;width:7px">F</span><span style="display:inline-block;width:8px">A</span><span style="display:inline-block;width:9px">N</span><span style="display:inline-block;width:8px">E</span><span style="display:inline-block;width:7px">T</span></div>
<div style="left:294px;top:511px;width:714px;height:1px;background:#999999;"></div>
<div class="t" style="left:296px;top:497px;font-size:12px;font-weight:400"><span style="display:inline-block;width:7px">1</span><span style="display:inline-block;width:7px">0</span><span style="display:inline-block;width:7px">7</span></div>
<div class="t" style="left:446px;top:497px;font-size:12px;font-weight:400"><span style="display:inline-block;width:7px">К</span><span style="display:inline-block;width:9px">Ф</span><span style="display:inline-block;width:7px">1</span><span style="display:inline-block;width:7px">4</span><span style="display:inline-block;width:7px">3</span><span style="display:inline-block;width:7px">5</span><span style="display:inline-block;width:7px">9</span><span style="display:inline-block;width:7px">5</span><span style="display:inline-block;width:4px">-</span><span style="display:inline-block;width:7px">0</span><span style="display:inline-block;width:7px">6</span></div>
<div class="t" style="left:642px;top:497px;font-size:12px;font-weight:400"><span style="display:inline-block;width:7px">0</span><span style="display:inline-block;width:7px">3</span><span style="display:inline-block;width:3px">.</span><span style="display:inline-block;width:7px">0</span><span style="display:inline-block;width:7px">4</span><span style="display:inline-block;width:3px">.</span><span style="display:inline-block;width:7px">2</span><span style="display:inline-block;width:7px">0</span><span style="display:inline-block;width:7px">0</span><span style="display:inline-block;width:7px">6</span></div>
<div class="t" style="left:808px;top:497px;font-size:12px;font-weight:400"><span style="display:inline-block;width:9px">U</span><span style="display:inline-block;width:7px">F</span><span style="display:inline-block;width:8px">A</span><span style="display:inline-block;width:9px">N</span><span style="display:inline-block;width:8px">E</span><span style="display:inline-block;width:7px">T</span></div>
<div style="left:294px;top:527px;width:714px;height:1px;background:#999999;"></div>
<div class="t" style="left:296px;top:513px;font-size:12px;font-weight:400"><span style="display:inline-block;width:7px">1</span><span style="display:inline-block;width:7px">0</span><span style="display:inline-block;width:7px">8</span></div>
<div class="t" style="left:446px;top:513px;font-size:12px;font-weight:400"><span style="display:inline-block;width:7px">К</span><span style="display:inline-block;width:9px">Ф</span><span style="display:inline-block;width:7px">4</span><span style="display:inline-block;width:7px">1</span><span style="display:inline-block;width:7px">6</span><span style="display:inline-block;width:7px">5</span><span style="display:inline-block;width:7px">8</span><span style="display:inline-block;width:4px">-</span><span style="display:inline-block;width:7px">0</span><span style="display:inline-block;width:7px">5</span></div>
<div class="t" style="left:642px;top:513px;font-size:12px;font-weight:400"><span style="display:inline-block;width:7px">0</span><span style="display:inline-block;width:7px">3</span><span style="display:inline-block;width:3px">.</span><span style="display:inline-block;width:7px">0</span><span style="display:inline-block;width:7px">4</span><span style="display:inline-block;width:3px">.</span><span style="display:inline-block;width:7px">2</span><span style="display:inline-block;width:7px">0</span><span style="display:inline-block;width:7px">0</span><span style="display:inline-block;width:7px">6</span></div>
<div class="t" style="left:808px;top:513px;font-size:12px;font-weight:400"><span style="display:inline-block;width:9px">U</span><span style="display:inline-block;width:7px">F</span><span style="display:inline-block;width:8px">A</span><span style="display:inline-block;width:9px">N</span><span style="display:inline-block;width:8px">E</span><span style="display:inline-block;width:7px">T</span></div>
<div style="left:294px;top:543px;width:714px;height:1px;background:#999999;"></div>
<div class="t" style="left:296px;top:529px;font-size:12px;font-weight:400"><span style="display:inline-block;width:7px">1</span><span style="display:inline-block;width:7px">0</span><span style="display:inline-block;width:7px">9</span></div>
<div class="t" style="left:446px;top:529px;font-size:12px;font-weight:400"><span style="display:inline-block;width:7px">К</span><span style="display:inline-block;width:9px">Ф</span><span style="display:inline-block;width:7px">1</span><span style="display:inline-block;width:7px">2</span><span style="display:inline-block;width:7px">5</span><span style="display:inline-block;width:7px">2</span><span style="display:inline-block;width:7px">1</span><span style="display:inline-block;width:4px">-</span><span style="display:inline-block;width:7px">0</span><span style="display:inline-block;width:7px">5</span></div>
<div class="t" style="left:642px;top:529px;font-size:12px;font-weight:400"><span style="display:inline-block;width:7px">0</span><span style="display:inline-block;width:7px">3</span><span style="display:inline-block;width:3px">.</span><span style="display:inline-block;width:7px">0</span><span style="display:inline-block;width:7px">4</span><span style="display:inline-block;width:3px">.</span><span style="display:inline-block;width:7px">2</span><span style="display:inline-block;width:7px">0</span><span style="display:inline-block;width:7px">0</span><span style="display:inline-block;width:7px">6</span></div>
<div class="t" style="left:808px;top:529px;font-size:12px;font-weight:400"><span style="display:inline-block;width:9px">U</span><span style="display:inline-block;width:7px">F</span><span style="display:inline-block;width:8px">A</span><span style="display:inline-block;width:9px">N</span><span style="display:inline-block;width:8px">E</span><span style="display:inline-block;width:7px">T</span></div>
<div style="left:294px;top:559px;width:714px;height:1px;background:#999999;"></div>
<div class="t" style="left:296px;top:545px;font-size:12px;font-weight:400"><span style="display:inline-block;width:7px">1</span><span style="display:inline-block;width:7px">1</span><span style="display:inline-block;width:7px">0</span></div>
<div class="t" style="left:446px;top:545px;font-size:12px;font-weight:400"><span style="display:inline-block;width:7px">К</span><span style="display:inline-block;width:9px">Ф</span><span style="display:inline-block;width:7px">1</span><span style="display:inline-block;width:7px">4</span><span style="display:inline-block;width:7px">6</span><span style="display:inline-block;width:7px">8</span><span style="display:inline-block;width:7px">0</span><span style="display:inline-block;width:7px">3</span><span style="display:inline-block;width:4px">-</span><span style="display:inline-block;width:7px">0</span><span style="display:inline-block;width:7px">6</span></div>
<div class="t" style="left:642px;top:545px;font-size:12px;font-weight:400"><span style="display:inline-block;width:7px">0</span><span style="display:inline-block;width:7px">3</span><span style="display:inline-block;width:3px">.</span><span style="display:inline-block;width:7px">0</span><span style="display:inline-block;width:7px">4</span><span style="display:inline-block;width:3px">.</span><span style="display:inline-block;width:7px">2</span><span style="display:inline-block;width:7px">0</span><span style="display:inline-block;width:7px">0</span><span style="display:inline-block;width:7px">6</span></div>
<div class="t" style="left:808px;top:545px;font-size:12px;font-weight:400"><span style="display:inline-block;width:9px">U</span><span style="display:inline-block;width:7px">F</span><span style="display:inline-block;width:8px">A</span><span style="display:inline-block;width:9px">N</span><span style="display:inline-block;width:8px">E</span><span style="display:inline-block;width:7px">T</span></div>
<div style="left:294px;top:575px;width:714px;height:1px;background:#999999;"></div>
<div class="t" style="left:296px;top:561px;font-size:12px;font-weight:400"><span style="display:inline-block;width:7px">1</span><span style="display:inline-block;width:7px">1</span><span style="display:inline-block;width:7px">1</span></div>
<div class="t" style="left:446px;top:561px;font-size:12px;font-weight:400"><span style="display:inline-block;width:8px">В</span><span style="display:inline-block;width:7px">о</span><span style="display:inline-block;width:6px">з</span><span style="display:inline-block;width:6px">в</span><span style="display:inline-block;width:7px">р</span><span style="display:inline-block;width:7px">а</span><span style="display:inline-block;width:5px">т</span></div>
<div class="t" style="left:642px;top:561px;font-size:12px;font-weight:400"><span style="display:inline-block;width:7px">1</span><span style="display:inline-block;width:7px">8</span><span style="display:inline-block;width:3px">.</span><span style="display:inline-block;width:7px">0</span><span style="display:inline-block;width:7px">4</span><span style="display:inline-block;width:3px">.</span><span style="display:inline-block;width:7px">2</span><span style="display:inline-block;width:7px">0</span><span style="display:inline-block;width:7px">0</span><span style="display:inline-block;width:7px">6</span></div>
<div class="t" style="left:808px;top:561px;font-size:12px;font-weight:400"><span style="display:inline-block;width:8px">Б</span><span style="display:inline-block;width:7px">р</span><span style="display:inline-block;width:7px">а</span><span style="display:inline-block;width:5px">к</span><span style="display:inline-block;width:3px">&nbsp;</span><span style="display:inline-block;width:4px">(</span><span style="display:inline-block;width:6px">в</span><span style="display:inline-block;width:7px">о</span><span style="display:inline-block;width:6px">з</span><span style="display:inline-block;width:6px">в</span><span style="display:inline-block;width:7px">р</span><span style="display:inline-block;width:7px">а</span><span style="display:inline-block;width:5px">т</span><span style="display:inline-block;width:4px">)</span></div>
<div style="left:294px;top:591px;width:714px;height:1px;background:#999999;"></div>
<div class="t" style="left:296px;top:577px;font-size:12px;font-weight:400"><span style="display:inline-block;width:7px">1</span><span style="display:inline-block;width:7px">1</span><span style="display:inline-block;width:7px">2</span></div>
<div class="t" style="left:446px;top:577px;font-size:12px;font-weight:400"><span style="display:inline-block;width:9px">Ц</span><span style="display:inline-block;width:9px">Ф</span><span style="display:inline-block;width:7px">1</span><span style="display:inline-block;width:7px">0</span><span style="display:inline-block;width:7px">3</span><span style="display:inline-block;width:7px">1</span><span style="display:inline-block;width:4px">-</span><span style="display:inline-block;width:7px">0</span><span style="display:inline-block;width:7px">6</span></div>
<div class="t" style="left:642px;top:577px;font-size:12px;font-weight:400"><span style="display:inline-block;width:7px">0</span><span style="display:inline-block;width:7px">3</span><span style="display:inline-block;width:3px">.</span><span style="display:inline-block;width:7px">0</span><span style="display:inline-block;width:7px">4</span><span style="display:inline-block;width:3px">.</span><span style="display:inline-block;width:7px">2</span><span style="display:inline-block;width:7px">0</span><span style="display:inline-block;width:7px">0</span><span style="display:inline-block;width:7px">6</span></div>
<div class="t" style="left:808px;top:577px;font-size:12px;font-weight:400"><span style="display:inline-block;width:9px">U</span><span style="display:inline-block;width:7px">F</span><span style="display:inline-block;width:8px">A</span><span style="display:inline-block;width:9px">N</span><span style="display:inline-block;width:8px">E</span><span style="display:inline-block;width:7px">T</span></div>
<div style="left:443px;top:224px;width:1px;height:371px;background:#999999;"></div>
<div style="left:639px;top:224px;width:1px;height:371px;background:#999999;"></div>
<div style="left:805px;top:224px;width:1px;height:371px;background:#999999;"></div>
<div style="left:1008px;top:224px;width:16px;height:371px;background:#cccccc;"></div>
<div style="left:1008px;top:224px;width:1px;height:371px;background:#666666;"></div>
<div style="left:1009px;top:224px;width:1px;height:15px;background:#ffffff;"></div>
<div style="left:1009px;top:224px;width:14px;height:1px;background:#ffffff;"></div>
<svg style="left:1012px;top:229px" width="9" height="4"><path d="M3 0h3v1h-3z M2 1h5v1h-5z M1 2h7v1h-7z M0 3h9v1h-9z" fill="#000"/></svg>
<div style="left:1008px;top:239px;width:15px;height:263px;background:#9999cc;"></div>
<div style="left:1008px;top:239px;width:15px;height:1px;background:#666699;"></div>
<div style="left:1008px;top:501px;width:15px;height:1px;background:#666699;"></div>
<div style="left:1008px;top:239px;width:1px;height:263px;background:#666699;"></div>
<div style="left:1022px;top:239px;width:1px;height:263px;background:#666699;"></div>
<div style="left:1009px;top:240px;width:1px;height:261px;background:#ccccff;"></div>
<div style="left:1009px;top:240px;width:13px;height:1px;background:#ccccff;"></div>
<svg style="left:1011px;top:242px" width="10" height="257"><defs><pattern id="bv" width="4" height="4" patternUnits="userSpaceOnUse"><rect x="0" y="0" width="1" height="1" fill="#ccccff"/><rect x="2" y="2" width="1" height="1" fill="#ccccff"/><rect x="1" y="1" width="1" height="1" fill="#666699"/><rect x="3" y="3" width="1" height="1" fill="#666699"/></pattern></defs><rect width="10" height="257" fill="url(#bv)"/></svg>
<div style="left:1008px;top:579px;width:16px;height:1px;background:#666666;"></div>
<div style="left:1009px;top:580px;width:14px;height:1px;background:#ffffff;"></div>
<div style="left:1009px;top:580px;width:1px;height:14px;background:#ffffff;"></div>
<svg style="left:1012px;top:586px" width="9" height="4"><path d="M0 0h9v1h-9z M1 1h7v1h-7z M2 2h5v1h-5z M3 3h3v1h-3z" fill="#000"/></svg>
<div style="left:1008px;top:594px;width:16px;height:1px;background:#666666;"></div>
<div style="left:294px;top:595px;width:714px;height:15px;background:#cccccc;"></div>
<div style="left:294px;top:595px;width:714px;height:1px;background:#666666;"></div>
<div style="left:1008px;top:594px;width:16px;height:1px;background:#666666;"></div>
<div style="left:294px;top:596px;width:1px;height:14px;background:#ffffff;"></div>
<div style="left:294px;top:596px;width:15px;height:1px;background:#ffffff;"></div>
<svg style="left:299px;top:599px" width="4" height="8"><path d="M3 0h1v1h-1zM2 1h2v1h-2zM1 2h3v1h-3zM0 3h4v1h-4zM0 4h4v1h-4zM1 5h3v1h-3zM2 6h2v1h-2zM3 7h1v1h-1z" fill="#000000"/></svg>
<div style="left:309px;top:595px;width:502px;height:15px;background:#9999cc;"></div>
<div style="left:309px;top:595px;width:502px;height:1px;background:#666699;"></div>
<div style="left:309px;top:609px;width:502px;height:1px;background:#666699;"></div>
<div style="left:309px;top:595px;width:1px;height:15px;background:#666699;"></div>
<div style="left:810px;top:595px;width:1px;height:15px;background:#666699;"></div>
<div style="left:310px;top:596px;width:500px;height:1px;background:#ccccff;"></div>
<div style="left:310px;top:596px;width:1px;height:13px;background:#ccccff;"></div>
<svg style="left:313px;top:598px" width="495" height="10"><defs><pattern id="bh" width="4" height="4" patternUnits="userSpaceOnUse"><rect x="0" y="0" width="1" height="1" fill="#ccccff"/><rect x="2" y="2" width="1" height="1" fill="#ccccff"/><rect x="1" y="1" width="1" height="1" fill="#666699"/><rect x="3" y="3" width="1" height="1" fill="#666699"/></pattern></defs><rect width="495" height="10" fill="url(#bh)"/></svg>
<div style="left:992px;top:596px;width:1px;height:14px;background:#666666;"></div>
<div style="left:993px;top:596px;width:1px;height:14px;background:#ffffff;"></div>
<div style="left:993px;top:596px;width:14px;height:1px;background:#ffffff;"></div>
<svg style="left:999px;top:599px" width="4" height="8"><path d="M0 0h1v1h-1zM0 1h2v1h-2zM0 2h3v1h-3zM0 3h4v1h-4zM0 4h4v1h-4zM0 5h3v1h-3zM0 6h2v1h-2zM0 7h1v1h-1z" fill="#000000"/></svg>
<div style="left:1007px;top:595px;width:1px;height:16px;background:#666666;"></div>
<div style="left:1008px;top:595px;width:15px;height:15px;background:#cccccc;"></div>
<div style="left:294px;top:610px;width:730px;height:1px;background:#666666;"></div>
<div style="left:1023px;top:207px;width:1px;height:404px;background:#666666;"></div>
<div class="t" style="left:293px;top:620px;font-size:12px;font-weight:700;color:#000;letter-spacing:-0.3px;">Всего карт:</div>
<div class="t" style="left:362px;top:621px;font-size:13px;font-weight:400;color:#000;letter-spacing:0.9px;">1911</div>
<div style="left:161px;top:652px;width:881px;height:1px;background:#666666;"></div>
<div style="left:1041px;top:80px;width:1px;height:573px;background:#666666;"></div>
<div style="left:5px;top:652px;width:155px;height:21px;background:#cccccc;"></div>
<div style="left:4px;top:651px;width:1px;height:22px;background:#ffffff;"></div>
<div style="left:6px;top:673px;width:153px;height:1px;background:#666666;"></div>
<div style="left:160px;top:652px;width:1px;height:20px;background:#666666;"></div>
<div style="left:159px;top:672px;width:1px;height:1px;background:#666666;"></div>
<div style="left:9px;top:655px;width:16px;height:16px;background:#cccccc;"></div>
<div style="left:9px;top:655px;width:16px;height:1px;background:#ffffff;"></div>
<div style="left:9px;top:655px;width:1px;height:16px;background:#ffffff;"></div>
<div style="left:10px;top:670px;width:15px;height:1px;background:#999999;"></div>
<div style="left:24px;top:656px;width:1px;height:15px;background:#999999;"></div>
<svg style="left:13px;top:659px" width="8" height="8"><path d="M0 0h2v1h-2zM6 0h2v1h-2zM0 1h2v1h-2zM6 1h2v1h-2zM2 2h1v1h-1zM5 2h1v1h-1zM2 3h4v1h-4zM2 4h4v1h-4zM2 5h1v1h-1zM5 5h1v1h-1zM0 6h2v1h-2zM6 6h2v1h-2zM0 7h2v1h-2zM6 7h2v1h-2z" fill="#000000"/></svg>
<div class="t" style="left:30px;top:657px;font-size:12px;font-weight:700;color:#000;letter-spacing:-0.2px;">Модуль CerberCrypt</div>
</div></body></html>
